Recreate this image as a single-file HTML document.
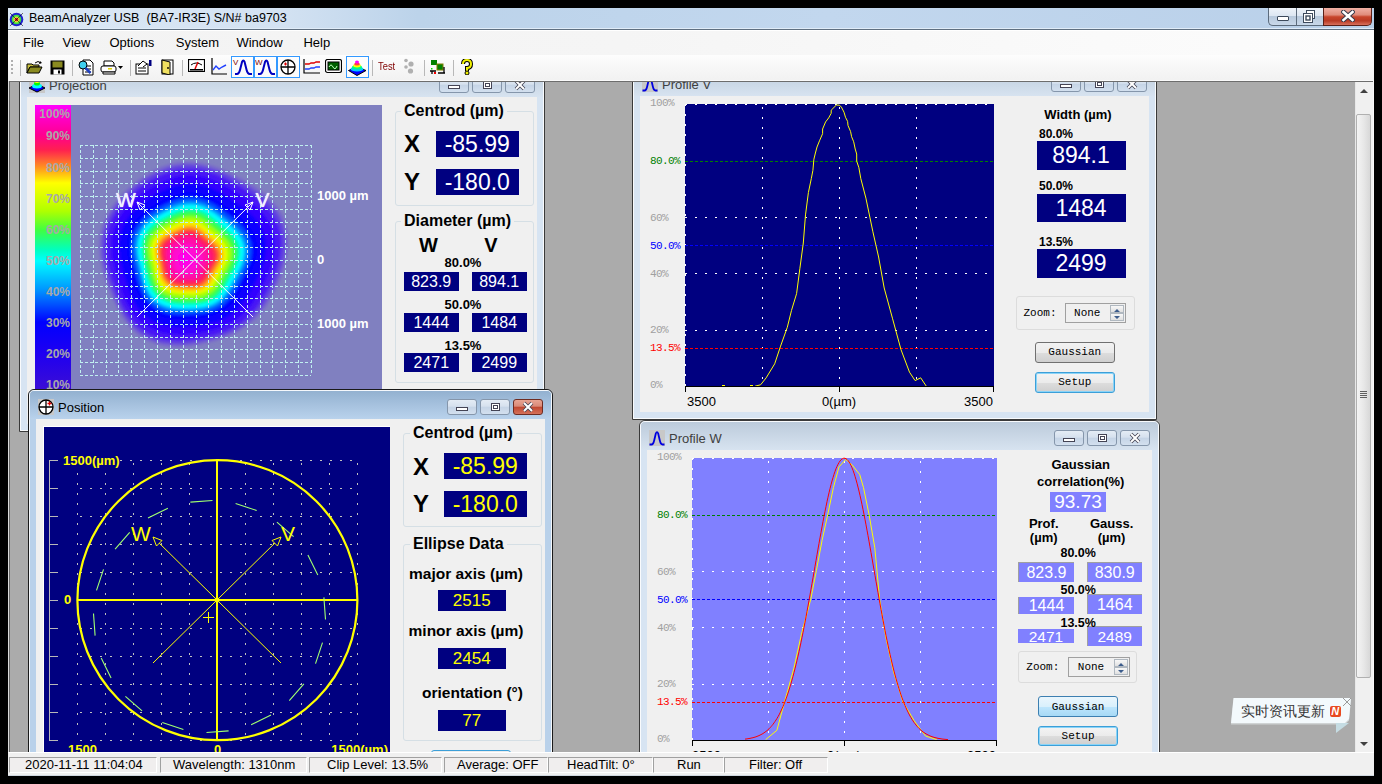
<!DOCTYPE html><html><head><meta charset="utf-8"><style>
html,body{margin:0;padding:0;width:1382px;height:784px;overflow:hidden;background:#000;}
*{box-sizing:border-box;}
</style></head><body>
<div style="position:absolute;left:8px;top:8px;width:1366px;height:21px;background:linear-gradient(90deg,#dce8f5 0%,#d3e2f2 20%,#bcd3ea 30%,#c2d7ee 60%,#b9d0e9 100%);"></div>
<div style="position:absolute;left:8px;top:28px;width:1366px;height:1px;background:#e0ecf8;"></div>
<div style="position:absolute;left:8px;top:29px;width:1366px;height:1px;background:#5f6f80;"></div>
<div style="position:absolute;left:8px;top:30px;width:1366px;height:25px;background:linear-gradient(90deg,#f3f3f3 0%,#f5f5f5 45%,#fafafa 80%,#fcfcfc 100%);border-top:1px solid #fff;"></div>
<div style="position:absolute;left:8px;top:55px;width:1366px;height:26px;background:linear-gradient(#fdfdfd,#f1f1f1);"></div>
<div style="position:absolute;left:8px;top:80px;width:1366px;height:1px;background:#fafafa;"></div>
<div style="position:absolute;left:8px;top:81px;width:1366px;height:671px;background:#ababab;"></div>
<div style="position:absolute;left:8px;top:81px;width:1366px;height:1px;background:#6d6d6d;"></div>
<div style="position:absolute;left:8px;top:81px;width:2px;height:671px;background:#dadada;"></div>
<div style="position:absolute;left:9px;top:81px;width:1px;height:671px;background:#696969;"></div>
<div style="position:absolute;left:0;top:0;width:1382px;height:784px;clip-path:inset(82px 27px 32px 10px);"><div style="position:absolute;left:19px;top:67px;width:526px;height:365px;background:#d7e4f2;border:1px solid #3a3a3a;border-radius:6px 6px 0 0;"></div>
<div style="position:absolute;left:20px;top:68px;width:524px;height:363px;border:1px solid rgba(255,255,255,0.85);border-radius:5px 5px 0 0;"></div>
<div style="position:absolute;left:21px;top:69px;width:522px;height:28px;background:linear-gradient(#bccbdb,#d7e3f0);border-radius:4px 4px 0 0;"></div>
<div style="position:absolute;left:27px;top:97px;width:510px;height:327px;background:#f0f0f0;"></div>
<svg style="position:absolute;left:29px;top:77px;" width="16" height="16" viewBox="0 0 16 16"><rect width="16" height="16" fill="#c8c8c8"/><path d="M0 11L8 7l8 4-8 4z" fill="#0000ff" stroke="#000" stroke-width="1"/><ellipse cx="8" cy="9" rx="5" ry="2.5" fill="#00ffff"/><ellipse cx="8" cy="6.5" rx="3" ry="2" fill="#00ff00"/><ellipse cx="8" cy="4.5" rx="2.5" ry="1.5" fill="#ffff00"/></svg>
<div style="position:absolute;left:49px;top:72.5px;height:26px;font:normal 13px 'Liberation Sans', sans-serif;line-height:26px;color:#404040;white-space:nowrap;">Projection</div>
<div style="position:absolute;left:504.5px;top:77px;width:30.0px;height:16px;background:linear-gradient(#e4ecf5 0%,#d6e1ee 45%,#c5d4e6 50%,#d3e0ef 100%);border:1px solid #8596ab;border-radius:3px;"></div>
<svg style="position:absolute;left:512.5px;top:79px;" width="14" height="12" viewBox="0 0 14 12"><path d="M3 2L11 10M11 2L3 10" stroke="#445" stroke-width="3.6"/><path d="M3 2L11 10M11 2L3 10" stroke="#fff" stroke-width="2"/></svg>
<div style="position:absolute;left:471.5px;top:77px;width:30.0px;height:16px;background:linear-gradient(#e4ecf5 0%,#d6e1ee 45%,#c5d4e6 50%,#d3e0ef 100%);border:1px solid #8596ab;border-radius:3px;"></div>
<div style="position:absolute;left:482.5px;top:81px;width:9.0px;height:8px;border:1px solid #445;background:#fff;"></div>
<div style="position:absolute;left:484.5px;top:83px;width:5.0px;height:4px;border:1px solid #445;background:transparent;"></div>
<div style="position:absolute;left:438.5px;top:77px;width:30.0px;height:16px;background:linear-gradient(#e4ecf5 0%,#d6e1ee 45%,#c5d4e6 50%,#d3e0ef 100%);border:1px solid #8596ab;border-radius:3px;"></div>
<div style="position:absolute;left:447.5px;top:85px;width:12.0px;height:4px;border:1px solid #445;background:#fff;"></div>
<div style="position:absolute;left:35px;top:105px;width:36px;height:319px;background:linear-gradient(#ff00ff 0px,#ff00c0 15px,#ff0090 30px,#ff2050 45px,#ff9020 62px,#ffff00 78px,#b0ff00 106px,#40ff40 125px,#00ffc0 145px,#00ffff 156px,#0090ff 186px,#0000ff 217px,#2000f0 250px,#4010d0 290px,#5020c0 319px);"></div>
<div style="position:absolute;left:-330px;width:400px;text-align:right;top:102px;height:24px;font:bold 12px 'Liberation Sans', sans-serif;line-height:24px;color:#a8a8a8;white-space:nowrap;">100%</div>
<div style="position:absolute;left:-330px;width:400px;text-align:right;top:124px;height:24px;font:bold 12px 'Liberation Sans', sans-serif;line-height:24px;color:#a8a8a8;white-space:nowrap;">90%</div>
<div style="position:absolute;left:-330px;width:400px;text-align:right;top:155.7px;height:24px;font:bold 12px 'Liberation Sans', sans-serif;line-height:24px;color:#a8a8a8;white-space:nowrap;">80%</div>
<div style="position:absolute;left:-330px;width:400px;text-align:right;top:187px;height:24px;font:bold 12px 'Liberation Sans', sans-serif;line-height:24px;color:#a8a8a8;white-space:nowrap;">70%</div>
<div style="position:absolute;left:-330px;width:400px;text-align:right;top:218px;height:24px;font:bold 12px 'Liberation Sans', sans-serif;line-height:24px;color:#a8a8a8;white-space:nowrap;">60%</div>
<div style="position:absolute;left:-330px;width:400px;text-align:right;top:249.39999999999998px;height:24px;font:bold 12px 'Liberation Sans', sans-serif;line-height:24px;color:#a8a8a8;white-space:nowrap;">50%</div>
<div style="position:absolute;left:-330px;width:400px;text-align:right;top:280px;height:24px;font:bold 12px 'Liberation Sans', sans-serif;line-height:24px;color:#a8a8a8;white-space:nowrap;">40%</div>
<div style="position:absolute;left:-330px;width:400px;text-align:right;top:311.4px;height:24px;font:bold 12px 'Liberation Sans', sans-serif;line-height:24px;color:#a8a8a8;white-space:nowrap;">30%</div>
<div style="position:absolute;left:-330px;width:400px;text-align:right;top:342.4px;height:24px;font:bold 12px 'Liberation Sans', sans-serif;line-height:24px;color:#a8a8a8;white-space:nowrap;">20%</div>
<div style="position:absolute;left:-330px;width:400px;text-align:right;top:372.6px;height:24px;font:bold 12px 'Liberation Sans', sans-serif;line-height:24px;color:#a8a8a8;white-space:nowrap;">10%</div>
<div style="position:absolute;left:71px;top:105px;width:311px;height:319px;background:#8080c0;"></div>
<svg style="position:absolute;left:0px;top:0px;" width="400" height="430" viewBox="0 0 400 430"><defs><filter id="bl" x="-20%" y="-20%" width="140%" height="140%"><feGaussianBlur stdDeviation="1.6"/></filter></defs><g filter="url(#bl)"><polygon points="287.5,256.5 285.6,264.5 283.2,272.1 280.4,279.5 277.4,286.7 274.0,293.6 270.3,300.3 266.2,306.7 261.6,312.8 256.5,318.5 250.8,323.6 244.6,328.1 238.1,331.9 231.2,335.2 224.2,338.0 217.0,340.4 209.7,342.4 202.2,344.2 194.5,345.7 186.6,346.8 178.5,347.3 170.2,347.0 162.0,345.8 153.9,343.6 146.2,340.2 139.1,335.7 132.6,330.2 127.0,324.0 122.1,317.2 117.9,310.1 114.2,302.8 110.9,295.5 108.0,288.0 105.2,280.4 102.8,272.7 100.9,264.7 99.5,256.5 98.9,248.1 99.2,239.7 100.6,231.3 103.0,223.2 106.5,215.4 110.7,208.1 115.7,201.3 121.2,195.0 127.2,189.2 133.4,183.7 140.0,178.7 146.9,174.1 154.2,170.0 161.8,166.6 169.7,163.9 177.9,162.2 186.2,161.4 194.5,161.7 202.7,162.9 210.6,164.9 218.3,167.5 225.8,170.6 233.0,174.0 240.1,177.6 247.0,181.5 254.0,185.6 260.7,190.3 267.2,195.5 273.2,201.4 278.5,208.0 282.9,215.3 286.1,223.2 288.1,231.4 288.9,239.9 288.7,248.3" fill="#7868cc"/><polygon points="284.3,256.6 282.4,264.3 280.1,271.7 277.3,278.9 274.3,285.8 271.1,292.4 267.5,298.9 263.6,305.2 259.2,311.1 254.2,316.6 248.8,321.6 242.9,326.1 236.5,329.9 229.9,333.1 223.0,335.8 216.0,338.0 208.9,340.0 201.7,341.6 194.2,343.0 186.6,343.9 178.7,344.4 170.8,344.1 162.8,343.0 154.9,340.9 147.5,337.6 140.5,333.3 134.3,328.1 128.8,322.1 124.0,315.5 120.0,308.6 116.5,301.5 113.4,294.3 110.5,287.1 108.0,279.7 105.7,272.2 103.8,264.5 102.4,256.6 101.8,248.5 102.1,240.4 103.3,232.2 105.6,224.4 108.9,216.8 113.0,209.7 117.8,203.1 123.2,197.0 129.0,191.4 135.1,186.2 141.5,181.4 148.2,177.0 155.3,173.0 162.6,169.7 170.2,167.1 178.1,165.4 186.2,164.6 194.2,164.8 202.2,166.0 209.9,167.9 217.3,170.4 224.5,173.5 231.4,176.8 238.2,180.4 245.0,184.2 251.6,188.2 258.1,192.7 264.4,197.8 270.2,203.4 275.3,209.8 279.6,216.8 282.8,224.4 284.8,232.3 285.7,240.5 285.4,248.6" fill="#6040e0"/><polygon points="280.0,256.8 278.2,264.1 275.9,271.2 273.2,278.0 270.3,284.6 267.1,290.9 263.8,297.1 260.0,303.1 255.9,308.8 251.2,314.1 246.1,319.0 240.5,323.3 234.4,327.1 228.1,330.2 221.5,332.8 214.8,334.9 207.9,336.7 201.0,338.1 193.8,339.3 186.6,340.2 179.1,340.6 171.5,340.3 163.8,339.2 156.3,337.2 149.1,334.2 142.5,330.2 136.4,325.2 131.2,319.4 126.6,313.2 122.8,306.5 119.5,299.7 116.6,292.8 114.0,285.8 111.6,278.8 109.5,271.6 107.7,264.3 106.4,256.8 105.7,249.0 105.8,241.2 106.9,233.5 109.0,225.9 112.1,218.6 116.0,211.8 120.7,205.5 125.9,199.7 131.5,194.4 137.4,189.5 143.6,184.9 150.0,180.8 156.7,177.1 163.7,173.9 171.0,171.4 178.5,169.7 186.2,168.9 193.8,169.0 201.4,170.0 208.8,171.8 215.9,174.3 222.8,177.2 229.4,180.5 235.8,184.0 242.2,187.7 248.5,191.7 254.6,196.0 260.6,200.8 266.1,206.1 271.1,212.1 275.2,218.8 278.4,226.0 280.4,233.6 281.3,241.3 281.1,249.1" fill="#4818f4"/><polygon points="273.6,257.0 271.9,263.8 269.6,270.4 267.0,276.7 264.2,282.8 261.3,288.7 258.1,294.4 254.7,300.0 251.0,305.4 246.8,310.4 242.1,315.1 236.9,319.2 231.3,322.8 225.4,325.8 219.2,328.2 212.9,330.1 206.5,331.7 199.9,332.9 193.3,333.9 186.5,334.5 179.6,334.8 172.5,334.6 165.4,333.6 158.4,331.8 151.7,329.1 145.4,325.4 139.7,320.8 134.7,315.5 130.5,309.6 127.0,303.4 124.0,297.0 121.4,290.5 119.1,284.0 117.0,277.4 115.1,270.7 113.5,263.9 112.2,257.0 111.5,249.8 111.5,242.5 112.4,235.3 114.2,228.2 117.0,221.4 120.6,215.0 125.0,209.1 129.9,203.7 135.2,198.8 140.8,194.4 146.6,190.3 152.6,186.5 158.9,183.1 165.3,180.2 172.1,177.8 179.0,176.1 186.1,175.3 193.3,175.3 200.4,176.1 207.3,177.8 213.9,180.1 220.2,182.9 226.3,186.1 232.3,189.5 238.1,193.0 243.8,196.8 249.4,200.8 254.9,205.2 260.1,210.2 264.8,215.7 268.8,221.8 271.8,228.4 273.8,235.4 274.7,242.6 274.6,249.8" fill="#3000ff"/><polygon points="265.0,257.2 263.4,263.4 261.3,269.4 258.8,275.0 256.2,280.4 253.5,285.7 250.7,290.8 247.7,295.9 244.4,300.8 240.8,305.5 236.6,309.8 232.1,313.7 227.1,317.0 221.7,319.8 216.1,322.0 210.3,323.6 204.5,324.9 198.6,325.9 192.6,326.6 186.4,327.0 180.2,327.2 173.9,326.9 167.5,326.1 161.2,324.6 155.0,322.2 149.3,319.0 144.1,315.0 139.6,310.2 135.8,304.9 132.6,299.2 130.0,293.3 127.9,287.4 126.0,281.5 124.2,275.6 122.6,269.6 121.1,263.5 119.9,257.2 119.2,250.8 119.0,244.3 119.6,237.7 121.2,231.3 123.6,225.1 126.8,219.3 130.7,214.0 135.2,209.2 140.1,204.8 145.3,200.9 150.6,197.3 156.1,194.1 161.7,191.1 167.5,188.5 173.5,186.3 179.8,184.7 186.1,183.8 192.6,183.6 198.9,184.3 205.1,185.8 211.1,187.9 216.8,190.6 222.3,193.5 227.5,196.7 232.6,200.1 237.6,203.5 242.6,207.2 247.5,211.1 252.2,215.5 256.5,220.3 260.2,225.7 263.1,231.6 265.0,237.8 266.0,244.3 265.9,250.8" fill="#1000ff"/><polygon points="256.4,257.5 254.9,263.1 252.9,268.3 250.6,273.3 248.3,278.1 245.8,282.7 243.3,287.3 240.7,291.8 237.9,296.2 234.7,300.5 231.2,304.5 227.2,308.1 222.8,311.1 218.0,313.7 212.9,315.6 207.8,317.0 202.5,318.1 197.2,318.8 191.8,319.2 186.4,319.5 180.9,319.6 175.2,319.3 169.6,318.6 163.9,317.4 158.4,315.4 153.2,312.6 148.6,309.1 144.5,304.8 141.1,300.1 138.3,295.0 136.1,289.7 134.3,284.4 132.7,279.0 131.3,273.7 130.0,268.4 128.7,263.1 127.6,257.5 126.8,251.8 126.5,246.0 126.9,240.2 128.1,234.4 130.2,228.8 133.0,223.6 136.6,218.9 140.7,214.6 145.1,210.8 149.8,207.5 154.6,204.4 159.5,201.6 164.5,199.0 169.7,196.7 175.0,194.7 180.5,193.2 186.1,192.3 191.8,192.0 197.5,192.6 203.0,193.8 208.4,195.8 213.4,198.2 218.2,201.0 222.8,203.9 227.2,207.0 231.6,210.2 235.9,213.4 240.2,216.9 244.4,220.7 248.3,224.9 251.6,229.6 254.4,234.8 256.2,240.3 257.2,246.0 257.2,251.8" fill="#0000ff"/><polygon points="251.0,257.7 249.6,262.8 247.7,267.6 245.5,272.2 243.3,276.6 241.0,280.9 238.7,285.1 236.3,289.2 233.8,293.3 231.0,297.3 227.7,301.1 224.1,304.5 220.0,307.4 215.6,309.8 210.9,311.6 206.1,312.9 201.2,313.7 196.3,314.3 191.3,314.6 186.3,314.8 181.3,314.8 176.1,314.6 170.9,314.0 165.6,312.9 160.5,311.1 155.7,308.6 151.4,305.3 147.6,301.5 144.4,297.1 141.9,292.3 139.9,287.4 138.3,282.4 137.0,277.5 135.7,272.6 134.5,267.7 133.4,262.8 132.3,257.7 131.5,252.5 131.2,247.1 131.5,241.7 132.5,236.3 134.4,231.2 137.0,226.3 140.3,222.0 144.1,218.1 148.2,214.6 152.6,211.6 157.1,208.8 161.6,206.3 166.3,203.9 171.0,201.8 175.9,199.9 180.9,198.5 186.1,197.6 191.3,197.3 196.6,197.7 201.7,198.9 206.6,200.7 211.3,203.0 215.7,205.6 219.8,208.4 223.8,211.3 227.8,214.3 231.8,217.3 235.7,220.5 239.5,224.0 243.2,227.8 246.4,232.1 248.9,236.8 250.7,241.8 251.7,247.1 251.7,252.4" fill="#0050ff"/><polygon points="246.6,257.9 245.3,262.6 243.5,267.1 241.5,271.4 239.3,275.5 237.2,279.4 235.0,283.3 232.9,287.2 230.5,291.1 227.9,294.8 225.0,298.4 221.6,301.6 217.8,304.4 213.7,306.6 209.3,308.3 204.8,309.5 200.2,310.2 195.6,310.7 191.0,311.0 186.3,311.1 181.6,311.1 176.8,310.8 171.9,310.3 167.0,309.2 162.2,307.6 157.7,305.3 153.6,302.4 150.1,298.7 147.1,294.6 144.8,290.2 143.0,285.6 141.5,280.9 140.3,276.3 139.2,271.7 138.2,267.2 137.1,262.6 136.1,257.9 135.3,253.0 134.9,248.0 135.2,242.9 136.1,237.9 137.8,233.0 140.2,228.5 143.3,224.4 146.8,220.8 150.8,217.6 154.9,214.8 159.1,212.3 163.3,210.0 167.6,207.8 172.0,205.8 176.6,204.1 181.2,202.7 186.1,201.8 191.0,201.5 195.9,201.9 200.7,202.9 205.2,204.6 209.6,206.8 213.6,209.3 217.5,212.0 221.2,214.7 224.8,217.5 228.5,220.4 232.1,223.3 235.7,226.5 239.1,230.1 242.1,234.0 244.6,238.3 246.4,243.0 247.3,247.9 247.3,252.9" fill="#00a0ff"/><polygon points="243.4,258.0 242.1,262.5 240.4,266.7 238.4,270.7 236.4,274.6 234.3,278.3 232.3,282.0 230.3,285.7 228.1,289.3 225.7,292.9 222.9,296.3 219.7,299.4 216.2,302.1 212.3,304.2 208.1,305.8 203.8,306.9 199.4,307.6 195.1,308.0 190.7,308.2 186.3,308.3 181.8,308.2 177.3,308.0 172.7,307.5 168.0,306.5 163.5,305.0 159.2,302.9 155.3,300.1 152.0,296.7 149.2,292.8 147.0,288.6 145.3,284.2 144.0,279.8 142.9,275.4 141.9,271.0 140.9,266.8 139.8,262.4 138.9,258.0 138.1,253.4 137.8,248.6 137.9,243.8 138.7,239.1 140.3,234.5 142.6,230.2 145.5,226.3 148.9,222.9 152.6,219.9 156.6,217.3 160.6,214.9 164.6,212.8 168.7,210.7 172.8,208.9 177.1,207.2 181.5,205.9 186.1,205.0 190.7,204.7 195.3,205.0 199.9,206.0 204.2,207.6 208.3,209.7 212.1,212.1 215.7,214.6 219.2,217.3 222.6,219.9 226.0,222.6 229.5,225.4 232.9,228.4 236.1,231.8 239.0,235.4 241.4,239.5 243.1,243.9 244.0,248.6 244.0,253.3" fill="#00ffff"/><polygon points="239.0,258.1 237.8,262.3 236.2,266.2 234.3,269.9 232.4,273.4 230.5,276.8 228.7,280.2 226.8,283.6 224.8,287.1 222.6,290.4 220.1,293.6 217.2,296.5 213.9,299.0 210.3,301.0 206.5,302.5 202.5,303.5 198.4,304.1 194.4,304.4 190.3,304.5 186.3,304.5 182.1,304.5 178.0,304.2 173.7,303.8 169.4,302.9 165.2,301.6 161.2,299.6 157.6,297.1 154.5,293.9 151.9,290.3 149.9,286.4 148.4,282.3 147.2,278.2 146.2,274.2 145.3,270.2 144.4,266.2 143.5,262.2 142.6,258.1 141.9,253.9 141.5,249.5 141.6,245.0 142.3,240.6 143.7,236.4 145.8,232.4 148.5,228.8 151.7,225.7 155.2,222.9 158.8,220.6 162.5,218.4 166.3,216.5 170.0,214.6 173.9,212.9 177.8,211.3 181.8,210.1 186.0,209.2 190.3,208.9 194.6,209.2 198.8,210.1 202.8,211.5 206.6,213.5 210.1,215.8 213.4,218.2 216.5,220.7 219.6,223.2 222.8,225.7 225.9,228.2 229.1,231.0 232.1,234.0 234.8,237.4 237.0,241.1 238.7,245.2 239.5,249.4 239.6,253.8" fill="#00ff90"/><polygon points="235.7,258.2 234.6,262.1 233.0,265.8 231.3,269.3 229.5,272.6 227.7,275.8 225.9,278.9 224.2,282.1 222.4,285.3 220.4,288.5 218.0,291.6 215.3,294.3 212.3,296.7 208.9,298.6 205.2,300.0 201.5,300.9 197.7,301.4 193.8,301.7 190.0,301.7 186.2,301.7 182.4,301.6 178.5,301.4 174.5,301.0 170.4,300.2 166.5,299.0 162.7,297.2 159.3,294.8 156.4,291.9 154.0,288.5 152.1,284.8 150.7,281.0 149.6,277.1 148.7,273.2 147.9,269.5 147.1,265.8 146.3,262.0 145.4,258.2 144.7,254.2 144.3,250.1 144.3,246.0 145.0,241.8 146.3,237.8 148.2,234.1 150.8,230.7 153.8,227.8 157.0,225.2 160.5,223.0 164.0,221.0 167.5,219.2 171.1,217.5 174.6,215.9 178.3,214.4 182.1,213.2 186.0,212.4 190.0,212.0 194.1,212.3 198.0,213.1 201.8,214.5 205.3,216.4 208.6,218.5 211.6,220.8 214.6,223.2 217.5,225.6 220.4,227.9 223.3,230.3 226.3,232.9 229.1,235.7 231.7,238.8 233.8,242.3 235.4,246.1 236.2,250.1 236.3,254.2" fill="#40ff40"/><polygon points="231.3,258.4 230.3,261.9 228.8,265.3 227.2,268.4 225.5,271.4 223.9,274.3 222.3,277.2 220.8,280.1 219.1,283.1 217.3,286.0 215.2,288.8 212.8,291.4 210.0,293.6 206.9,295.3 203.6,296.6 200.1,297.4 196.6,297.8 193.1,298.0 189.7,298.0 186.2,298.0 182.7,297.9 179.1,297.7 175.5,297.3 171.8,296.6 168.2,295.5 164.8,293.9 161.6,291.8 158.9,289.1 156.7,286.0 155.0,282.6 153.8,279.1 152.8,275.5 152.1,272.0 151.4,268.6 150.7,265.2 149.9,261.8 149.1,258.4 148.4,254.7 148.0,251.0 148.0,247.2 148.5,243.4 149.7,239.7 151.5,236.3 153.8,233.2 156.5,230.6 159.6,228.3 162.8,226.3 166.0,224.5 169.2,222.9 172.4,221.4 175.7,219.9 179.0,218.5 182.5,217.4 186.0,216.6 189.7,216.3 193.3,216.5 196.9,217.2 200.4,218.5 203.6,220.2 206.5,222.2 209.3,224.4 211.9,226.6 214.5,228.7 217.2,230.9 219.8,233.1 222.5,235.4 225.1,237.9 227.5,240.7 229.5,243.9 231.0,247.3 231.8,250.9 231.9,254.7" fill="#a0ff00"/><polygon points="227.0,258.5 226.0,261.7 224.7,264.7 223.2,267.6 221.6,270.3 220.1,272.9 218.7,275.5 217.3,278.1 215.9,280.8 214.3,283.5 212.4,286.0 210.2,288.4 207.7,290.4 204.9,292.0 201.9,293.1 198.8,293.9 195.6,294.2 192.4,294.4 189.3,294.3 186.2,294.2 183.0,294.1 179.8,294.0 176.5,293.6 173.2,293.0 169.9,292.1 166.8,290.7 163.9,288.7 161.5,286.3 159.5,283.5 158.0,280.4 156.8,277.2 156.0,274.0 155.4,270.8 154.8,267.7 154.2,264.7 153.5,261.6 152.8,258.5 152.1,255.2 151.7,251.9 151.7,248.4 152.1,245.0 153.1,241.6 154.7,238.5 156.8,235.8 159.3,233.4 162.1,231.3 165.0,229.6 167.9,228.0 170.9,226.6 173.8,225.2 176.7,223.9 179.7,222.6 182.8,221.6 186.0,220.8 189.3,220.5 192.6,220.6 195.9,221.3 198.9,222.5 201.8,224.1 204.5,225.9 207.0,227.9 209.3,229.9 211.6,231.9 214.0,233.8 216.4,235.8 218.8,237.8 221.2,240.1 223.4,242.6 225.2,245.4 226.6,248.5 227.3,251.8 227.4,255.2" fill="#e8ff00"/><polygon points="223.7,258.6 222.7,261.6 221.5,264.3 220.1,266.9 218.7,269.4 217.3,271.8 216.0,274.2 214.7,276.6 213.4,279.1 212.0,281.6 210.3,284.0 208.3,286.1 206.0,288.0 203.4,289.5 200.6,290.6 197.8,291.2 194.8,291.5 191.9,291.6 189.0,291.5 186.1,291.4 183.3,291.3 180.3,291.2 177.3,290.9 174.2,290.3 171.2,289.5 168.3,288.2 165.7,286.4 163.4,284.2 161.6,281.6 160.2,278.8 159.2,275.8 158.5,272.9 157.9,269.9 157.4,267.1 156.8,264.3 156.2,261.5 155.5,258.6 154.9,255.6 154.5,252.5 154.4,249.3 154.8,246.2 155.7,243.1 157.2,240.2 159.1,237.7 161.5,235.5 164.0,233.6 166.7,232.0 169.4,230.6 172.1,229.3 174.8,228.1 177.5,226.8 180.2,225.7 183.0,224.7 186.0,224.0 189.0,223.7 192.1,223.8 195.1,224.4 197.9,225.5 200.5,226.9 203.0,228.7 205.2,230.5 207.4,232.4 209.5,234.2 211.6,236.0 213.8,237.8 216.1,239.7 218.2,241.7 220.3,244.0 222.0,246.6 223.3,249.4 224.0,252.4 224.1,255.5" fill="#ffd000"/><polygon points="220.3,258.7 219.5,261.4 218.4,263.9 217.1,266.3 215.8,268.5 214.5,270.7 213.3,272.9 212.2,275.1 211.0,277.4 209.7,279.7 208.2,281.9 206.4,283.9 204.3,285.6 201.9,287.0 199.4,287.9 196.7,288.5 194.0,288.8 191.4,288.8 188.7,288.8 186.1,288.6 183.5,288.5 180.8,288.4 178.0,288.1 175.3,287.6 172.5,286.9 169.8,285.7 167.4,284.1 165.4,282.1 163.7,279.7 162.4,277.2 161.5,274.4 160.9,271.7 160.4,269.0 160.0,266.4 159.5,263.9 158.9,261.3 158.3,258.7 157.7,256.0 157.3,253.2 157.2,250.3 157.5,247.3 158.3,244.5 159.7,241.9 161.4,239.6 163.6,237.6 165.9,235.9 168.4,234.5 170.9,233.2 173.3,232.0 175.8,230.9 178.2,229.8 180.7,228.8 183.3,227.8 186.0,227.2 188.7,226.8 191.5,226.9 194.2,227.5 196.8,228.5 199.3,229.8 201.5,231.4 203.5,233.1 205.5,234.9 207.3,236.5 209.3,238.2 211.3,239.8 213.3,241.5 215.3,243.4 217.2,245.4 218.8,247.8 220.0,250.3 220.6,253.1 220.8,255.9" fill="#ff8020"/><polygon points="217.0,258.8 216.3,261.3 215.2,263.5 214.0,265.7 212.8,267.7 211.7,269.7 210.6,271.6 209.6,273.6 208.6,275.7 207.4,277.8 206.0,279.8 204.4,281.6 202.5,283.2 200.4,284.4 198.1,285.3 195.7,285.8 193.3,286.0 190.8,286.1 188.5,286.0 186.1,285.9 183.7,285.7 181.3,285.6 178.8,285.4 176.3,284.9 173.8,284.3 171.4,283.2 169.2,281.8 167.3,280.0 165.8,277.9 164.6,275.5 163.8,273.0 163.3,270.6 162.9,268.1 162.5,265.8 162.1,263.5 161.6,261.2 161.0,258.8 160.5,256.4 160.1,253.8 160.0,251.2 160.2,248.5 161.0,246.0 162.2,243.6 163.8,241.5 165.7,239.7 167.8,238.2 170.1,236.9 172.3,235.8 174.6,234.8 176.8,233.8 179.0,232.8 181.2,231.8 183.6,231.0 186.0,230.3 188.5,230.0 191.0,230.1 193.4,230.6 195.8,231.5 198.0,232.7 200.0,234.2 201.8,235.7 203.5,237.3 205.2,238.9 206.9,240.3 208.7,241.8 210.6,243.3 212.4,245.0 214.1,246.9 215.6,249.0 216.7,251.3 217.3,253.7 217.4,256.3" fill="#ff3040"/><polygon points="213.7,258.9 213.0,261.1 212.1,263.1 211.0,265.0 209.9,266.8 208.9,268.6 207.9,270.3 207.0,272.1 206.1,274.0 205.1,275.8 203.9,277.7 202.5,279.3 200.8,280.8 198.9,281.9 196.8,282.7 194.7,283.1 192.5,283.3 190.3,283.3 188.2,283.2 186.1,283.1 184.0,282.9 181.8,282.8 179.6,282.6 177.3,282.3 175.1,281.7 172.9,280.7 170.9,279.5 169.3,277.9 167.9,276.0 166.9,273.8 166.2,271.6 165.7,269.4 165.4,267.2 165.0,265.1 164.7,263.1 164.2,261.0 163.7,258.9 163.2,256.7 162.8,254.5 162.7,252.1 162.9,249.7 163.6,247.5 164.6,245.3 166.1,243.5 167.8,241.8 169.8,240.5 171.8,239.4 173.8,238.4 175.8,237.5 177.8,236.6 179.7,235.7 181.7,234.8 183.8,234.1 186.0,233.5 188.2,233.2 190.4,233.3 192.6,233.7 194.7,234.5 196.7,235.6 198.4,236.9 200.1,238.3 201.6,239.8 203.1,241.2 204.6,242.5 206.2,243.8 207.9,245.1 209.5,246.6 211.1,248.3 212.4,250.1 213.4,252.2 213.9,254.4 214.0,256.7" fill="#ff1870"/><polygon points="209.3,259.1 208.7,260.9 207.9,262.6 207.0,264.2 206.0,265.7 205.2,267.2 204.4,268.6 203.6,270.1 202.9,271.7 202.0,273.3 201.0,274.8 199.9,276.3 198.4,277.5 196.8,278.4 195.1,279.1 193.3,279.5 191.4,279.6 189.6,279.6 187.8,279.5 186.0,279.3 184.3,279.2 182.4,279.1 180.6,278.9 178.7,278.7 176.8,278.2 175.0,277.4 173.3,276.4 171.9,275.0 170.7,273.4 169.9,271.6 169.3,269.8 168.9,267.9 168.7,266.0 168.4,264.3 168.1,262.5 167.7,260.8 167.3,259.1 166.9,257.2 166.5,255.3 166.4,253.3 166.6,251.3 167.1,249.4 168.0,247.6 169.2,246.0 170.7,244.7 172.3,243.6 174.0,242.6 175.7,241.8 177.4,241.1 179.1,240.4 180.7,239.6 182.4,238.9 184.1,238.2 185.9,237.7 187.8,237.5 189.7,237.5 191.6,237.8 193.3,238.5 194.9,239.5 196.4,240.6 197.8,241.8 199.0,243.0 200.3,244.2 201.6,245.3 202.9,246.4 204.3,247.5 205.7,248.8 207.0,250.1 208.1,251.7 209.0,253.4 209.5,255.3 209.6,257.2" fill="#ff10a8"/><polygon points="202.6,259.3 202.2,260.6 201.6,261.8 200.9,262.9 200.3,264.0 199.6,265.1 199.1,266.1 198.5,267.2 198.0,268.3 197.4,269.5 196.7,270.6 195.9,271.6 194.9,272.5 193.8,273.2 192.5,273.7 191.2,273.9 189.9,274.0 188.5,274.0 187.3,273.9 186.0,273.8 184.7,273.7 183.4,273.6 182.1,273.5 180.7,273.3 179.4,272.9 178.1,272.4 176.9,271.7 175.8,270.7 175.0,269.6 174.4,268.3 174.0,266.9 173.8,265.6 173.6,264.3 173.4,263.0 173.3,261.8 173.0,260.5 172.7,259.3 172.3,258.0 172.1,256.6 172.0,255.2 172.1,253.8 172.4,252.4 173.0,251.1 173.9,249.9 175.0,249.0 176.2,248.2 177.4,247.6 178.7,247.0 179.9,246.5 181.0,246.0 182.2,245.4 183.4,244.9 184.6,244.4 185.9,244.0 187.3,243.8 188.6,243.8 189.9,244.1 191.2,244.6 192.4,245.3 193.4,246.1 194.4,247.0 195.2,247.9 196.1,248.7 197.0,249.5 197.9,250.3 198.9,251.1 199.9,252.0 200.9,252.9 201.7,254.0 202.4,255.2 202.7,256.6 202.8,257.9" fill="#ff08d0"/><polygon points="194.8,259.5 194.6,260.2 194.3,260.9 193.9,261.5 193.5,262.1 193.2,262.6 192.9,263.2 192.6,263.7 192.3,264.3 192.0,265.0 191.7,265.6 191.2,266.2 190.7,266.6 190.1,267.0 189.4,267.3 188.7,267.4 188.0,267.4 187.3,267.4 186.6,267.3 185.9,267.2 185.3,267.2 184.6,267.1 183.9,267.1 183.1,267.0 182.4,266.8 181.7,266.6 181.0,266.2 180.5,265.7 180.0,265.0 179.7,264.3 179.5,263.6 179.4,262.9 179.3,262.2 179.3,261.5 179.2,260.8 179.0,260.2 178.9,259.5 178.7,258.8 178.5,258.1 178.4,257.3 178.5,256.6 178.7,255.8 179.0,255.1 179.5,254.5 180.0,254.0 180.7,253.6 181.4,253.3 182.0,253.0 182.7,252.7 183.3,252.5 183.9,252.2 184.6,251.9 185.2,251.6 185.9,251.4 186.6,251.3 187.3,251.3 188.0,251.4 188.7,251.7 189.3,252.1 189.9,252.5 190.4,253.0 190.8,253.5 191.3,254.0 191.8,254.4 192.3,254.8 192.8,255.2 193.3,255.7 193.9,256.2 194.3,256.7 194.7,257.4 194.9,258.1 194.9,258.8" fill="#ff00e8"/></g></svg>
<svg style="position:absolute;left:0px;top:0px;" width="400" height="430" viewBox="0 0 400 430"><line x1="80.5" y1="145" x2="80.5" y2="375" stroke="#c0f0f0" stroke-width="1" stroke-dasharray="3 2" stroke-dashoffset="0" shape-rendering="crispEdges"/><line x1="80" y1="145.5" x2="311" y2="145.5" stroke="#c0f0f0" stroke-width="1" stroke-dasharray="3 2" stroke-dashoffset="0" shape-rendering="crispEdges"/><line x1="93.5" y1="145" x2="93.5" y2="375" stroke="#c0f0f0" stroke-width="1" stroke-dasharray="3 2" stroke-dashoffset="0" shape-rendering="crispEdges"/><line x1="80" y1="158.5" x2="311" y2="158.5" stroke="#c0f0f0" stroke-width="1" stroke-dasharray="3 2" stroke-dashoffset="0" shape-rendering="crispEdges"/><line x1="106.5" y1="145" x2="106.5" y2="375" stroke="#c0f0f0" stroke-width="1" stroke-dasharray="3 2" stroke-dashoffset="0" shape-rendering="crispEdges"/><line x1="80" y1="171.5" x2="311" y2="171.5" stroke="#c0f0f0" stroke-width="1" stroke-dasharray="3 2" stroke-dashoffset="0" shape-rendering="crispEdges"/><line x1="118.5" y1="145" x2="118.5" y2="375" stroke="#c0f0f0" stroke-width="1" stroke-dasharray="3 2" stroke-dashoffset="0" shape-rendering="crispEdges"/><line x1="80" y1="183.5" x2="311" y2="183.5" stroke="#c0f0f0" stroke-width="1" stroke-dasharray="3 2" stroke-dashoffset="0" shape-rendering="crispEdges"/><line x1="131.5" y1="145" x2="131.5" y2="375" stroke="#c0f0f0" stroke-width="1" stroke-dasharray="3 2" stroke-dashoffset="0" shape-rendering="crispEdges"/><line x1="80" y1="196.5" x2="311" y2="196.5" stroke="#c0f0f0" stroke-width="1" stroke-dasharray="3 2" stroke-dashoffset="0" shape-rendering="crispEdges"/><line x1="144.5" y1="145" x2="144.5" y2="375" stroke="#c0f0f0" stroke-width="1" stroke-dasharray="3 2" stroke-dashoffset="0" shape-rendering="crispEdges"/><line x1="80" y1="209.5" x2="311" y2="209.5" stroke="#c0f0f0" stroke-width="1" stroke-dasharray="3 2" stroke-dashoffset="0" shape-rendering="crispEdges"/><line x1="157.5" y1="145" x2="157.5" y2="375" stroke="#c0f0f0" stroke-width="1" stroke-dasharray="3 2" stroke-dashoffset="0" shape-rendering="crispEdges"/><line x1="80" y1="222.5" x2="311" y2="222.5" stroke="#c0f0f0" stroke-width="1" stroke-dasharray="3 2" stroke-dashoffset="0" shape-rendering="crispEdges"/><line x1="170.5" y1="145" x2="170.5" y2="375" stroke="#c0f0f0" stroke-width="1" stroke-dasharray="3 2" stroke-dashoffset="0" shape-rendering="crispEdges"/><line x1="80" y1="234.5" x2="311" y2="234.5" stroke="#c0f0f0" stroke-width="1" stroke-dasharray="3 2" stroke-dashoffset="0" shape-rendering="crispEdges"/><line x1="183.5" y1="145" x2="183.5" y2="375" stroke="#c0f0f0" stroke-width="1" stroke-dasharray="3 2" stroke-dashoffset="0" shape-rendering="crispEdges"/><line x1="80" y1="247.5" x2="311" y2="247.5" stroke="#c0f0f0" stroke-width="1" stroke-dasharray="3 2" stroke-dashoffset="0" shape-rendering="crispEdges"/><line x1="196.5" y1="145" x2="196.5" y2="375" stroke="#c0f0f0" stroke-width="1" stroke-dasharray="3 2" stroke-dashoffset="0" shape-rendering="crispEdges"/><line x1="80" y1="260.5" x2="311" y2="260.5" stroke="#c0f0f0" stroke-width="1" stroke-dasharray="3 2" stroke-dashoffset="0" shape-rendering="crispEdges"/><line x1="208.5" y1="145" x2="208.5" y2="375" stroke="#c0f0f0" stroke-width="1" stroke-dasharray="3 2" stroke-dashoffset="0" shape-rendering="crispEdges"/><line x1="80" y1="273.5" x2="311" y2="273.5" stroke="#c0f0f0" stroke-width="1" stroke-dasharray="3 2" stroke-dashoffset="0" shape-rendering="crispEdges"/><line x1="221.5" y1="145" x2="221.5" y2="375" stroke="#c0f0f0" stroke-width="1" stroke-dasharray="3 2" stroke-dashoffset="0" shape-rendering="crispEdges"/><line x1="80" y1="286.5" x2="311" y2="286.5" stroke="#c0f0f0" stroke-width="1" stroke-dasharray="3 2" stroke-dashoffset="0" shape-rendering="crispEdges"/><line x1="234.5" y1="145" x2="234.5" y2="375" stroke="#c0f0f0" stroke-width="1" stroke-dasharray="3 2" stroke-dashoffset="0" shape-rendering="crispEdges"/><line x1="80" y1="298.5" x2="311" y2="298.5" stroke="#c0f0f0" stroke-width="1" stroke-dasharray="3 2" stroke-dashoffset="0" shape-rendering="crispEdges"/><line x1="247.5" y1="145" x2="247.5" y2="375" stroke="#c0f0f0" stroke-width="1" stroke-dasharray="3 2" stroke-dashoffset="0" shape-rendering="crispEdges"/><line x1="80" y1="311.5" x2="311" y2="311.5" stroke="#c0f0f0" stroke-width="1" stroke-dasharray="3 2" stroke-dashoffset="0" shape-rendering="crispEdges"/><line x1="260.5" y1="145" x2="260.5" y2="375" stroke="#c0f0f0" stroke-width="1" stroke-dasharray="3 2" stroke-dashoffset="0" shape-rendering="crispEdges"/><line x1="80" y1="324.5" x2="311" y2="324.5" stroke="#c0f0f0" stroke-width="1" stroke-dasharray="3 2" stroke-dashoffset="0" shape-rendering="crispEdges"/><line x1="272.5" y1="145" x2="272.5" y2="375" stroke="#c0f0f0" stroke-width="1" stroke-dasharray="3 2" stroke-dashoffset="0" shape-rendering="crispEdges"/><line x1="80" y1="337.5" x2="311" y2="337.5" stroke="#c0f0f0" stroke-width="1" stroke-dasharray="3 2" stroke-dashoffset="0" shape-rendering="crispEdges"/><line x1="285.5" y1="145" x2="285.5" y2="375" stroke="#c0f0f0" stroke-width="1" stroke-dasharray="3 2" stroke-dashoffset="0" shape-rendering="crispEdges"/><line x1="80" y1="349.5" x2="311" y2="349.5" stroke="#c0f0f0" stroke-width="1" stroke-dasharray="3 2" stroke-dashoffset="0" shape-rendering="crispEdges"/><line x1="298.5" y1="145" x2="298.5" y2="375" stroke="#c0f0f0" stroke-width="1" stroke-dasharray="3 2" stroke-dashoffset="0" shape-rendering="crispEdges"/><line x1="80" y1="362.5" x2="311" y2="362.5" stroke="#c0f0f0" stroke-width="1" stroke-dasharray="3 2" stroke-dashoffset="0" shape-rendering="crispEdges"/><line x1="311.5" y1="145" x2="311.5" y2="375" stroke="#c0f0f0" stroke-width="1" stroke-dasharray="3 2" stroke-dashoffset="0" shape-rendering="crispEdges"/><line x1="80" y1="375.5" x2="311" y2="375.5" stroke="#c0f0f0" stroke-width="1" stroke-dasharray="3 2" stroke-dashoffset="0" shape-rendering="crispEdges"/><path d="M137 317L253 202M253 317L137 202" stroke="#fff" stroke-width="1"/><path d="M137 202l3 8 5-5z M253 202l-8 3 5 5z" fill="none" stroke="#fff" stroke-width="1"/></svg>
<div style="position:absolute;left:116px;top:178.6px;height:42px;font:normal 21px 'Liberation Sans', sans-serif;line-height:42px;color:#f0f0ff;white-space:nowrap;text-shadow:0 0 1px #fff;">W</div>
<div style="position:absolute;left:255.5px;top:178.6px;height:42px;font:normal 21px 'Liberation Sans', sans-serif;line-height:42px;color:#f0f0ff;white-space:nowrap;text-shadow:0 0 1px #fff;">V</div>
<div style="position:absolute;left:317px;top:183px;height:26px;font:bold 13px 'Liberation Sans', sans-serif;line-height:26px;color:#fff;white-space:nowrap;">1000 &micro;m</div>
<div style="position:absolute;left:317px;top:247px;height:26px;font:bold 13px 'Liberation Sans', sans-serif;line-height:26px;color:#fff;white-space:nowrap;">0</div>
<div style="position:absolute;left:317px;top:311px;height:26px;font:bold 13px 'Liberation Sans', sans-serif;line-height:26px;color:#fff;white-space:nowrap;">1000 &micro;m</div>
<div style="position:absolute;left:394.5px;top:110.5px;width:139.0px;height:95.0px;border:1px solid #d5dfe5;border-radius:3px;"></div>
<div style="position:absolute;left:401px;top:100.9px;height:19.2px;padding:0 3px;background:#f0f0f0;font:bold 16px 'Liberation Sans', sans-serif;line-height:19.2px;white-space:nowrap;">Centrod (&micro;m)</div>
<div style="position:absolute;left:404px;top:120px;height:48px;font:bold 24px 'Liberation Sans', sans-serif;line-height:48px;color:#000;white-space:nowrap;">X</div>
<div style="position:absolute;left:435.5px;top:130.5px;width:83.5px;height:26.5px;background:#000080;color:#fff;font:normal 23px 'Liberation Sans', sans-serif;line-height:26.5px;text-align:center;white-space:nowrap;">-85.99</div>
<div style="position:absolute;left:404px;top:158px;height:48px;font:bold 24px 'Liberation Sans', sans-serif;line-height:48px;color:#000;white-space:nowrap;">Y</div>
<div style="position:absolute;left:435.5px;top:168.5px;width:83.5px;height:26.5px;background:#000080;color:#fff;font:normal 23px 'Liberation Sans', sans-serif;line-height:26.5px;text-align:center;white-space:nowrap;">-180.0</div>
<div style="position:absolute;left:394.5px;top:220.5px;width:139.0px;height:162.5px;border:1px solid #d5dfe5;border-radius:3px;"></div>
<div style="position:absolute;left:401px;top:210.9px;height:19.2px;padding:0 3px;background:#f0f0f0;font:bold 16px 'Liberation Sans', sans-serif;line-height:19.2px;white-space:nowrap;">Diameter (&micro;m)</div>
<div style="position:absolute;left:228.5px;width:400px;text-align:center;top:224.6px;height:40px;font:bold 20px 'Liberation Sans', sans-serif;line-height:40px;color:#000;white-space:nowrap;">W</div>
<div style="position:absolute;left:291px;width:400px;text-align:center;top:224.6px;height:40px;font:bold 20px 'Liberation Sans', sans-serif;line-height:40px;color:#000;white-space:nowrap;">V</div>
<div style="position:absolute;left:263px;width:400px;text-align:center;top:250px;height:26px;font:bold 13px 'Liberation Sans', sans-serif;line-height:26px;color:#000;white-space:nowrap;">80.0%</div>
<div style="position:absolute;left:403.5px;top:272px;width:55.5px;height:19px;background:#000080;color:#fff;font:normal 16px 'Liberation Sans', sans-serif;line-height:19px;text-align:center;white-space:nowrap;">823.9</div>
<div style="position:absolute;left:471.5px;top:272px;width:55.5px;height:19px;background:#000080;color:#fff;font:normal 16px 'Liberation Sans', sans-serif;line-height:19px;text-align:center;white-space:nowrap;">894.1</div>
<div style="position:absolute;left:263px;width:400px;text-align:center;top:291.5px;height:26px;font:bold 13px 'Liberation Sans', sans-serif;line-height:26px;color:#000;white-space:nowrap;">50.0%</div>
<div style="position:absolute;left:403.5px;top:312.7px;width:55.5px;height:19.0px;background:#000080;color:#fff;font:normal 16px 'Liberation Sans', sans-serif;line-height:19.0px;text-align:center;white-space:nowrap;">1444</div>
<div style="position:absolute;left:471.5px;top:312.7px;width:55.5px;height:19.0px;background:#000080;color:#fff;font:normal 16px 'Liberation Sans', sans-serif;line-height:19.0px;text-align:center;white-space:nowrap;">1484</div>
<div style="position:absolute;left:263px;width:400px;text-align:center;top:332.8px;height:26px;font:bold 13px 'Liberation Sans', sans-serif;line-height:26px;color:#000;white-space:nowrap;">13.5%</div>
<div style="position:absolute;left:403.5px;top:352.5px;width:55.5px;height:19.0px;background:#000080;color:#fff;font:normal 16px 'Liberation Sans', sans-serif;line-height:19.0px;text-align:center;white-space:nowrap;">2471</div>
<div style="position:absolute;left:471.5px;top:352.5px;width:55.5px;height:19.0px;background:#000080;color:#fff;font:normal 16px 'Liberation Sans', sans-serif;line-height:19.0px;text-align:center;white-space:nowrap;">2499</div>
<div style="position:absolute;left:632px;top:66px;width:525px;height:354px;background:#d7e4f2;border:1px solid #3a3a3a;border-radius:6px 6px 0 0;"></div>
<div style="position:absolute;left:633px;top:67px;width:523px;height:352px;border:1px solid rgba(255,255,255,0.85);border-radius:5px 5px 0 0;"></div>
<div style="position:absolute;left:634px;top:68px;width:521px;height:28px;background:linear-gradient(#bccbdb,#d7e3f0);border-radius:4px 4px 0 0;"></div>
<div style="position:absolute;left:640px;top:96px;width:509px;height:316px;background:#f0f0f0;"></div>
<svg style="position:absolute;left:642px;top:76px;" width="16" height="16" viewBox="0 0 16 16"><rect width="16" height="16" fill="#c8c8c8"/><path d="M0.5 14.5H2.5Q4.3 14.5 5.3 10L6.8 3.5Q8 0.8 9.2 3.5L10.7 10Q11.7 14.5 13.5 14.5H15.5" stroke="#0000e0" fill="none" stroke-width="1.8"/></svg>
<div style="position:absolute;left:662px;top:71.5px;height:26px;font:normal 13px 'Liberation Sans', sans-serif;line-height:26px;color:#404040;white-space:nowrap;">Profile V</div>
<div style="position:absolute;left:1116.5px;top:76px;width:30.0px;height:16px;background:linear-gradient(#e4ecf5 0%,#d6e1ee 45%,#c5d4e6 50%,#d3e0ef 100%);border:1px solid #8596ab;border-radius:3px;"></div>
<svg style="position:absolute;left:1124.5px;top:78px;" width="14" height="12" viewBox="0 0 14 12"><path d="M3 2L11 10M11 2L3 10" stroke="#445" stroke-width="3.6"/><path d="M3 2L11 10M11 2L3 10" stroke="#fff" stroke-width="2"/></svg>
<div style="position:absolute;left:1083.5px;top:76px;width:30.0px;height:16px;background:linear-gradient(#e4ecf5 0%,#d6e1ee 45%,#c5d4e6 50%,#d3e0ef 100%);border:1px solid #8596ab;border-radius:3px;"></div>
<div style="position:absolute;left:1094.5px;top:80px;width:9.0px;height:8px;border:1px solid #445;background:#fff;"></div>
<div style="position:absolute;left:1096.5px;top:82px;width:5.0px;height:4px;border:1px solid #445;background:transparent;"></div>
<div style="position:absolute;left:1050.5px;top:76px;width:30.0px;height:16px;background:linear-gradient(#e4ecf5 0%,#d6e1ee 45%,#c5d4e6 50%,#d3e0ef 100%);border:1px solid #8596ab;border-radius:3px;"></div>
<div style="position:absolute;left:1059.5px;top:84px;width:12.0px;height:4px;border:1px solid #445;background:#fff;"></div>
<div style="position:absolute;left:685px;top:104px;width:309px;height:282px;background:#000080;"></div>
<svg style="position:absolute;left:0px;top:0px;" width="1382" height="784" viewBox="0 0 1382 784"><line x1="685" y1="104.5" x2="994" y2="104.5" stroke="#fff" stroke-width="1" stroke-dasharray="2 8" stroke-dashoffset="0" shape-rendering="crispEdges"/><line x1="685.5" y1="104" x2="685.5" y2="386" stroke="#fff" stroke-width="1" stroke-dasharray="2 8" stroke-dashoffset="0" shape-rendering="crispEdges"/><line x1="762.5" y1="104" x2="762.5" y2="386" stroke="#fff" stroke-width="1" stroke-dasharray="2 8" stroke-dashoffset="-3" shape-rendering="crispEdges"/><line x1="839.5" y1="104" x2="839.5" y2="386" stroke="#fff" stroke-width="1" stroke-dasharray="2 8" stroke-dashoffset="-3" shape-rendering="crispEdges"/><line x1="916.5" y1="104" x2="916.5" y2="386" stroke="#fff" stroke-width="1" stroke-dasharray="2 8" stroke-dashoffset="-3" shape-rendering="crispEdges"/><line x1="685" y1="217.5" x2="994" y2="217.5" stroke="#fff" stroke-width="1" stroke-dasharray="2 8" stroke-dashoffset="0" shape-rendering="crispEdges"/><line x1="685" y1="273.5" x2="994" y2="273.5" stroke="#fff" stroke-width="1" stroke-dasharray="2 8" stroke-dashoffset="0" shape-rendering="crispEdges"/><line x1="685" y1="330.5" x2="994" y2="330.5" stroke="#fff" stroke-width="1" stroke-dasharray="2 8" stroke-dashoffset="0" shape-rendering="crispEdges"/><line x1="685" y1="161.5" x2="994" y2="161.5" stroke="#008000" stroke-width="1" stroke-dasharray="3 2" stroke-dashoffset="0" shape-rendering="crispEdges"/><line x1="685" y1="245.5" x2="994" y2="245.5" stroke="#0000ff" stroke-width="1" stroke-dasharray="3 2" stroke-dashoffset="0" shape-rendering="crispEdges"/><line x1="685" y1="348.5" x2="994" y2="348.5" stroke="#ff0000" stroke-width="1" stroke-dasharray="3 2" stroke-dashoffset="0" shape-rendering="crispEdges"/><polyline points="755,386.2 760.6,384.8 766.2,377.8 774.7,363.8 780.3,346.9 787.3,327.3 791.5,310.4 796.6,293.6 799.9,268.3 803.3,243 805.5,214.9 808.4,192.5 811.3,178.6 812.9,170.4 813.9,159.2 815.4,153 817,147 819.5,140.8 822.6,133.7 822.6,129 825.6,121.9 828.7,117.9 831.2,113.3 831.2,110.2 836.3,105.1 839.4,105.1 841.4,107.1 844,112.2 845.5,117.3 847.6,121.4 848,125.5 850.6,131.6 851.6,136.7 853.7,141.8 855.2,149 856.7,154 856.7,161.2 858.8,167.3 860.8,178.6 865.9,198.1 872.9,231.8 878.6,257 884.2,288 892.6,318.8 901,349.7 909.5,372.2 915.1,380.6 920.7,377.8 926.3,386.2" fill="none" stroke="#ffff00" stroke-width="1" stroke-linejoin="round"/><path d="M685 386.5H994 M685.5 386v6 M993.5 386v6 M839.5 386v6" stroke="#000" stroke-width="1" shape-rendering="crispEdges"/></svg>
<div style="position:absolute;left:650px;top:92px;height:22px;font:normal 11px 'Liberation Mono', monospace;line-height:22px;color:#a0a0a0;white-space:nowrap;letter-spacing:-0.6px;">100%</div>
<div style="position:absolute;left:650px;top:150.3px;height:22px;font:normal 11px 'Liberation Mono', monospace;line-height:22px;color:#008000;white-space:nowrap;letter-spacing:-0.6px;">80.0%</div>
<div style="position:absolute;left:650px;top:206.6px;height:22px;font:normal 11px 'Liberation Mono', monospace;line-height:22px;color:#a0a0a0;white-space:nowrap;letter-spacing:-0.6px;">60%</div>
<div style="position:absolute;left:650px;top:234.75px;height:22px;font:normal 11px 'Liberation Mono', monospace;line-height:22px;color:#0000ff;white-space:nowrap;letter-spacing:-0.6px;">50.0%</div>
<div style="position:absolute;left:650px;top:262.9px;height:22px;font:normal 11px 'Liberation Mono', monospace;line-height:22px;color:#a0a0a0;white-space:nowrap;letter-spacing:-0.6px;">40%</div>
<div style="position:absolute;left:650px;top:319.2px;height:22px;font:normal 11px 'Liberation Mono', monospace;line-height:22px;color:#a0a0a0;white-space:nowrap;letter-spacing:-0.6px;">20%</div>
<div style="position:absolute;left:650px;top:337.4975px;height:22px;font:normal 11px 'Liberation Mono', monospace;line-height:22px;color:#ff0000;white-space:nowrap;letter-spacing:-0.6px;">13.5%</div>
<div style="position:absolute;left:650px;top:374px;height:22px;font:normal 11px 'Liberation Mono', monospace;line-height:22px;color:#a0a0a0;white-space:nowrap;letter-spacing:-0.6px;">0%</div>
<svg style="position:absolute;left:0px;top:0px;" width="1382" height="784" viewBox="0 0 1382 784"><path d="M722 385.5h3M750 385.5h3" stroke="#ffff00"/></svg>
<div style="position:absolute;left:687px;top:389px;height:26px;font:normal 13px 'Liberation Sans', sans-serif;line-height:26px;color:#000;white-space:nowrap;">3500</div>
<div style="position:absolute;left:639px;width:400px;text-align:center;top:389px;height:26px;font:normal 13px 'Liberation Sans', sans-serif;line-height:26px;color:#000;white-space:nowrap;">0(&micro;m)</div>
<div style="position:absolute;left:593px;width:400px;text-align:right;top:389px;height:26px;font:normal 13px 'Liberation Sans', sans-serif;line-height:26px;color:#000;white-space:nowrap;">3500</div>
<div style="position:absolute;left:878px;width:400px;text-align:center;top:101.7px;height:26px;font:bold 13px 'Liberation Sans', sans-serif;line-height:26px;color:#000;white-space:nowrap;">Width (&micro;m)</div>
<div style="position:absolute;left:1039px;top:122px;height:24px;font:bold 12px 'Liberation Sans', sans-serif;line-height:24px;color:#000;white-space:nowrap;">80.0%</div>
<div style="position:absolute;left:1036.5px;top:141px;width:89.0px;height:28.5px;background:#000080;color:#fff;font:normal 23px 'Liberation Sans', sans-serif;line-height:28.5px;text-align:center;white-space:nowrap;">894.1</div>
<div style="position:absolute;left:1039px;top:174.2px;height:24px;font:bold 12px 'Liberation Sans', sans-serif;line-height:24px;color:#000;white-space:nowrap;">50.0%</div>
<div style="position:absolute;left:1036.5px;top:193.5px;width:89.0px;height:28.5px;background:#000080;color:#fff;font:normal 23px 'Liberation Sans', sans-serif;line-height:28.5px;text-align:center;white-space:nowrap;">1484</div>
<div style="position:absolute;left:1039px;top:230px;height:24px;font:bold 12px 'Liberation Sans', sans-serif;line-height:24px;color:#000;white-space:nowrap;">13.5%</div>
<div style="position:absolute;left:1036.5px;top:249px;width:89.0px;height:28.5px;background:#000080;color:#fff;font:normal 23px 'Liberation Sans', sans-serif;line-height:28.5px;text-align:center;white-space:nowrap;">2499</div>
<div style="position:absolute;left:1015.5px;top:296px;width:119.0px;height:33.5px;border:1px solid #dcdcdc;border-radius:3px;"></div>
<div style="position:absolute;left:1023.5px;top:301.75px;height:22px;font:normal 11px 'Liberation Mono', monospace;line-height:22px;color:#000;white-space:nowrap;">Zoom:</div>
<div style="position:absolute;left:1064.5px;top:303px;width:61.5px;height:20px;background:#f0f0f0;border:1px solid #a0a0a0;"></div>
<div style="position:absolute;left:887.25px;width:400px;text-align:center;top:302.0px;height:22px;font:normal 11px 'Liberation Mono', monospace;line-height:22px;color:#000;white-space:nowrap;">None</div>
<div style="position:absolute;left:1110px;top:305px;width:14px;height:8.0px;border:1px solid #b0b8c0;background:linear-gradient(#f8f8f8,#e0e0e0);"></div>
<div style="position:absolute;left:1110px;top:313.0px;width:14px;height:8.0px;border:1px solid #b0b8c0;background:linear-gradient(#f8f8f8,#e0e0e0);"></div>
<svg style="position:absolute;left:1113px;top:307px;" width="8" height="14" viewBox="0 0 8 14"><path d="M1 5l3-3 3 3z M1 9l3 3 3-3z" fill="#3c5c8c"/></svg>
<div style="position:absolute;left:1035px;top:342px;width:79.5px;height:20.5px;background:linear-gradient(#f2f2f2 0%,#ebebeb 50%,#dddddd 51%,#cfcfcf 100%);border:1px solid #707070;border-radius:3px;"></div><div style="position:absolute;left:874.75px;width:400px;text-align:center;top:341.25px;height:22px;font:normal 11px 'Liberation Mono', monospace;line-height:22px;color:#000;white-space:nowrap;">Gaussian</div>
<div style="position:absolute;left:1035px;top:371.5px;width:79.5px;height:21.0px;background:linear-gradient(#f4f4f4 0%,#ebebeb 50%,#dddddd 51%,#cfcfcf 100%);border:1px solid #3c9fd8;box-shadow:inset 0 0 0 1px #8ad4f8;border-radius:3px;"></div><div style="position:absolute;left:874.75px;width:400px;text-align:center;top:371.0px;height:22px;font:normal 11px 'Liberation Mono', monospace;line-height:22px;color:#000;white-space:nowrap;">Setup</div>
<div style="position:absolute;left:639px;top:420px;width:521px;height:380px;background:#d7e4f2;border:1px solid #3a3a3a;border-radius:6px 6px 0 0;"></div>
<div style="position:absolute;left:640px;top:421px;width:519px;height:378px;border:1px solid rgba(255,255,255,0.85);border-radius:5px 5px 0 0;"></div>
<div style="position:absolute;left:641px;top:422px;width:517px;height:28px;background:linear-gradient(#bccbdb,#d7e3f0);border-radius:4px 4px 0 0;"></div>
<div style="position:absolute;left:647px;top:450px;width:505px;height:342px;background:#f0f0f0;"></div>
<svg style="position:absolute;left:649px;top:430px;" width="16" height="16" viewBox="0 0 16 16"><rect width="16" height="16" fill="#c8c8c8"/><path d="M0.5 14.5H2.5Q4.3 14.5 5.3 10L6.8 3.5Q8 0.8 9.2 3.5L10.7 10Q11.7 14.5 13.5 14.5H15.5" stroke="#0000e0" fill="none" stroke-width="1.8"/></svg>
<div style="position:absolute;left:669px;top:425.5px;height:26px;font:normal 13px 'Liberation Sans', sans-serif;line-height:26px;color:#404040;white-space:nowrap;">Profile W</div>
<div style="position:absolute;left:1119.5px;top:430px;width:30.0px;height:16px;background:linear-gradient(#e4ecf5 0%,#d6e1ee 45%,#c5d4e6 50%,#d3e0ef 100%);border:1px solid #8596ab;border-radius:3px;"></div>
<svg style="position:absolute;left:1127.5px;top:432px;" width="14" height="12" viewBox="0 0 14 12"><path d="M3 2L11 10M11 2L3 10" stroke="#445" stroke-width="3.6"/><path d="M3 2L11 10M11 2L3 10" stroke="#fff" stroke-width="2"/></svg>
<div style="position:absolute;left:1086.5px;top:430px;width:30.0px;height:16px;background:linear-gradient(#e4ecf5 0%,#d6e1ee 45%,#c5d4e6 50%,#d3e0ef 100%);border:1px solid #8596ab;border-radius:3px;"></div>
<div style="position:absolute;left:1097.5px;top:434px;width:9.0px;height:8px;border:1px solid #445;background:#fff;"></div>
<div style="position:absolute;left:1099.5px;top:436px;width:5.0px;height:4px;border:1px solid #445;background:transparent;"></div>
<div style="position:absolute;left:1053.5px;top:430px;width:30.0px;height:16px;background:linear-gradient(#e4ecf5 0%,#d6e1ee 45%,#c5d4e6 50%,#d3e0ef 100%);border:1px solid #8596ab;border-radius:3px;"></div>
<div style="position:absolute;left:1062.5px;top:438px;width:12.0px;height:4px;border:1px solid #445;background:#fff;"></div>
<div style="position:absolute;left:692px;top:458px;width:305px;height:282px;background:#8080ff;"></div>
<svg style="position:absolute;left:0px;top:0px;" width="1382" height="784" viewBox="0 0 1382 784"><line x1="692" y1="458.5" x2="997" y2="458.5" stroke="#fff" stroke-width="1" stroke-dasharray="2 8" stroke-dashoffset="0" shape-rendering="crispEdges"/><line x1="692.5" y1="458" x2="692.5" y2="740" stroke="#fff" stroke-width="1" stroke-dasharray="2 8" stroke-dashoffset="0" shape-rendering="crispEdges"/><line x1="768.5" y1="458" x2="768.5" y2="740" stroke="#fff" stroke-width="1" stroke-dasharray="2 8" stroke-dashoffset="-3" shape-rendering="crispEdges"/><line x1="844.5" y1="458" x2="844.5" y2="740" stroke="#fff" stroke-width="1" stroke-dasharray="2 8" stroke-dashoffset="-3" shape-rendering="crispEdges"/><line x1="920.5" y1="458" x2="920.5" y2="740" stroke="#fff" stroke-width="1" stroke-dasharray="2 8" stroke-dashoffset="-3" shape-rendering="crispEdges"/><line x1="692" y1="571.5" x2="997" y2="571.5" stroke="#fff" stroke-width="1" stroke-dasharray="2 8" stroke-dashoffset="0" shape-rendering="crispEdges"/><line x1="692" y1="627.5" x2="997" y2="627.5" stroke="#fff" stroke-width="1" stroke-dasharray="2 8" stroke-dashoffset="0" shape-rendering="crispEdges"/><line x1="692" y1="684.5" x2="997" y2="684.5" stroke="#fff" stroke-width="1" stroke-dasharray="2 8" stroke-dashoffset="0" shape-rendering="crispEdges"/><line x1="692" y1="515.5" x2="997" y2="515.5" stroke="#008000" stroke-width="1" stroke-dasharray="3 2" stroke-dashoffset="0" shape-rendering="crispEdges"/><line x1="692" y1="599.5" x2="997" y2="599.5" stroke="#0000ff" stroke-width="1" stroke-dasharray="3 2" stroke-dashoffset="0" shape-rendering="crispEdges"/><line x1="692" y1="702.5" x2="997" y2="702.5" stroke="#ff0000" stroke-width="1" stroke-dasharray="3 2" stroke-dashoffset="0" shape-rendering="crispEdges"/><polyline points="765.6,739.7 776.9,730.3 784.5,702 793.9,668.2 801.4,634.3 810.8,599 816.4,570.4 822.1,540.3 827.7,514.7 833.4,487.6 839,466.9 845.8,459.4 852.2,465 859.7,474.5 863.5,487.6 869.1,514.7 874.8,547.8 879.6,599 886,638.1 893.6,672 903,702 914.3,720.9 925.5,736 936.8,739.7" fill="none" stroke="#ffff00" stroke-width="1" stroke-linejoin="round"/><polyline points="745.0,739.1 746.0,739.0 747.0,738.9 748.0,738.7 749.0,738.5 750.0,738.4 751.0,738.1 752.0,737.9 753.0,737.7 754.0,737.4 755.0,737.1 756.0,736.8 757.0,736.4 758.0,736.0 759.0,735.6 760.0,735.1 761.0,734.6 762.0,734.1 763.0,733.5 764.0,732.8 765.0,732.1 766.0,731.4 767.0,730.6 768.0,729.7 769.0,728.8 770.0,727.8 771.0,726.7 772.0,725.5 773.0,724.3 774.0,722.9 775.0,721.5 776.0,720.0 777.0,718.4 778.0,716.7 779.0,714.9 780.0,712.9 781.0,710.9 782.0,708.7 783.0,706.5 784.0,704.1 785.0,701.5 786.0,698.9 787.0,696.1 788.0,693.1 789.0,690.1 790.0,686.9 791.0,683.5 792.0,680.0 793.0,676.4 794.0,672.6 795.0,668.7 796.0,664.6 797.0,660.4 798.0,656.1 799.0,651.6 800.0,647.0 801.0,642.3 802.0,637.4 803.0,632.5 804.0,627.4 805.0,622.2 806.0,616.9 807.0,611.5 808.0,606.0 809.0,600.5 810.0,594.9 811.0,589.2 812.0,583.5 813.0,577.8 814.0,572.0 815.0,566.3 816.0,560.5 817.0,554.8 818.0,549.1 819.0,543.4 820.0,537.9 821.0,532.4 822.0,526.9 823.0,521.6 824.0,516.4 825.0,511.4 826.0,506.5 827.0,501.7 828.0,497.2 829.0,492.8 830.0,488.7 831.0,484.7 832.0,481.0 833.0,477.6 834.0,474.3 835.0,471.4 836.0,468.7 837.0,466.4 838.0,464.3 839.0,462.5 840.0,461.0 841.0,459.8 842.0,459.0 843.0,458.4 844.0,458.2 845.0,458.3 846.0,458.7 847.0,459.5 848.0,460.5 849.0,461.9 850.0,463.5 851.0,465.5 852.0,467.8 853.0,470.3 854.0,473.1 855.0,476.2 856.0,479.6 857.0,483.2 858.0,487.1 859.0,491.1 860.0,495.4 861.0,499.9 862.0,504.6 863.0,509.4 864.0,514.4 865.0,519.5 866.0,524.8 867.0,530.2 868.0,535.6 869.0,541.2 870.0,546.8 871.0,552.5 872.0,558.2 873.0,564.0 874.0,569.7 875.0,575.5 876.0,581.2 877.0,586.9 878.0,592.6 879.0,598.3 880.0,603.8 881.0,609.3 882.0,614.7 883.0,620.1 884.0,625.3 885.0,630.4 886.0,635.5 887.0,640.4 888.0,645.1 889.0,649.8 890.0,654.3 891.0,658.7 892.0,663.0 893.0,667.1 894.0,671.1 895.0,674.9 896.0,678.6 897.0,682.1 898.0,685.5 899.0,688.8 900.0,691.9 901.0,694.9 902.0,697.8 903.0,700.5 904.0,703.1 905.0,705.5 906.0,707.8 907.0,710.0 908.0,712.1 909.0,714.1 910.0,716.0 911.0,717.7 912.0,719.4 913.0,720.9 914.0,722.4 915.0,723.7 916.0,725.0 917.0,726.2 918.0,727.3 919.0,728.4 920.0,729.3 921.0,730.2 922.0,731.1 923.0,731.9 924.0,732.6 925.0,733.2 926.0,733.8 927.0,734.4 928.0,734.9 929.0,735.4 930.0,735.9 931.0,736.3 932.0,736.6 933.0,737.0 934.0,737.3 935.0,737.6 936.0,737.8 937.0,738.1 938.0,738.3 939.0,738.5 940.0,738.6 941.0,738.8 942.0,739.0 943.0,739.1 944.0,739.2 945.0,739.3 946.0,739.4 947.0,739.5 948.0,739.6" fill="none" stroke="#ff0000" stroke-width="1" stroke-linejoin="round"/><path d="M692 740.5H997 M692.5 740v6 M996.5 740v6 M844.5 740v6" stroke="#000" stroke-width="1" shape-rendering="crispEdges"/></svg>
<div style="position:absolute;left:657px;top:446px;height:22px;font:normal 11px 'Liberation Mono', monospace;line-height:22px;color:#a0a0a0;white-space:nowrap;letter-spacing:-0.6px;">100%</div>
<div style="position:absolute;left:657px;top:504.29999999999995px;height:22px;font:normal 11px 'Liberation Mono', monospace;line-height:22px;color:#008000;white-space:nowrap;letter-spacing:-0.6px;">80.0%</div>
<div style="position:absolute;left:657px;top:560.6px;height:22px;font:normal 11px 'Liberation Mono', monospace;line-height:22px;color:#a0a0a0;white-space:nowrap;letter-spacing:-0.6px;">60%</div>
<div style="position:absolute;left:657px;top:588.75px;height:22px;font:normal 11px 'Liberation Mono', monospace;line-height:22px;color:#0000ff;white-space:nowrap;letter-spacing:-0.6px;">50.0%</div>
<div style="position:absolute;left:657px;top:616.9px;height:22px;font:normal 11px 'Liberation Mono', monospace;line-height:22px;color:#a0a0a0;white-space:nowrap;letter-spacing:-0.6px;">40%</div>
<div style="position:absolute;left:657px;top:673.2px;height:22px;font:normal 11px 'Liberation Mono', monospace;line-height:22px;color:#a0a0a0;white-space:nowrap;letter-spacing:-0.6px;">20%</div>
<div style="position:absolute;left:657px;top:691.4975px;height:22px;font:normal 11px 'Liberation Mono', monospace;line-height:22px;color:#ff0000;white-space:nowrap;letter-spacing:-0.6px;">13.5%</div>
<div style="position:absolute;left:657px;top:728px;height:22px;font:normal 11px 'Liberation Mono', monospace;line-height:22px;color:#a0a0a0;white-space:nowrap;letter-spacing:-0.6px;">0%</div>
<div style="position:absolute;left:692px;top:742.5px;height:26px;font:normal 13px 'Liberation Sans', sans-serif;line-height:26px;color:#000;white-space:nowrap;">3500</div>
<div style="position:absolute;left:644px;width:400px;text-align:center;top:742.5px;height:26px;font:normal 13px 'Liberation Sans', sans-serif;line-height:26px;color:#000;white-space:nowrap;">0(&micro;m)</div>
<div style="position:absolute;left:596px;width:400px;text-align:right;top:742.5px;height:26px;font:normal 13px 'Liberation Sans', sans-serif;line-height:26px;color:#000;white-space:nowrap;">3500</div>
<div style="position:absolute;left:880.7px;width:400px;text-align:center;top:451.6px;height:26px;font:bold 13px 'Liberation Sans', sans-serif;line-height:26px;color:#000;white-space:nowrap;">Gaussian</div>
<div style="position:absolute;left:880.7px;width:400px;text-align:center;top:468.6px;height:26px;font:bold 13px 'Liberation Sans', sans-serif;line-height:26px;color:#000;white-space:nowrap;">correlation(%)</div>
<div style="position:absolute;left:1050px;top:492.3px;width:56px;height:19.69999999999999px;background:#8080ff;color:#fff;font:normal 19px 'Liberation Sans', sans-serif;line-height:19.69999999999999px;text-align:center;white-space:nowrap;">93.73</div>
<div style="position:absolute;left:843.7px;width:400px;text-align:center;top:510.6px;height:26px;font:bold 13px 'Liberation Sans', sans-serif;line-height:26px;color:#000;white-space:nowrap;">Prof.</div>
<div style="position:absolute;left:843.7px;width:400px;text-align:center;top:524.9px;height:26px;font:bold 13px 'Liberation Sans', sans-serif;line-height:26px;color:#000;white-space:nowrap;">(&micro;m)</div>
<div style="position:absolute;left:911.5999999999999px;width:400px;text-align:center;top:510.6px;height:26px;font:bold 13px 'Liberation Sans', sans-serif;line-height:26px;color:#000;white-space:nowrap;">Gauss.</div>
<div style="position:absolute;left:911.5999999999999px;width:400px;text-align:center;top:524.9px;height:26px;font:bold 13px 'Liberation Sans', sans-serif;line-height:26px;color:#000;white-space:nowrap;">(&micro;m)</div>
<div style="position:absolute;left:878.2px;width:400px;text-align:center;top:541.4px;height:25.0px;font:bold 12.5px 'Liberation Sans', sans-serif;line-height:25.0px;color:#000;white-space:nowrap;">80.0%</div>
<div style="position:absolute;left:1018px;top:562.2px;width:56px;height:19.799999999999955px;background:#8080ff;color:#fff;font:normal 16px 'Liberation Sans', sans-serif;line-height:19.799999999999955px;text-align:center;white-space:nowrap;border-top:1px solid #a0a0a0;border-left:1px solid #a0a0a0;">823.9</div>
<div style="position:absolute;left:1086.5px;top:562.2px;width:55.5px;height:19.799999999999955px;background:#8080ff;color:#fff;font:normal 16px 'Liberation Sans', sans-serif;line-height:19.799999999999955px;text-align:center;white-space:nowrap;border-top:1px solid #a0a0a0;border-left:1px solid #a0a0a0;">830.9</div>
<div style="position:absolute;left:1018px;top:596.8px;width:56px;height:17.40000000000009px;background:#8080ff;color:#fff;font:normal 16px 'Liberation Sans', sans-serif;line-height:17.40000000000009px;text-align:center;white-space:nowrap;border-left:1px solid #a0a0a0;">1444</div>
<div style="position:absolute;left:1086.5px;top:594.4px;width:55.5px;height:19.800000000000068px;background:#8080ff;color:#fff;font:normal 16px 'Liberation Sans', sans-serif;line-height:19.800000000000068px;text-align:center;white-space:nowrap;border-top:1px solid #a0a0a0;border-left:1px solid #a0a0a0;">1464</div>
<div style="position:absolute;left:878.2px;width:400px;text-align:center;top:578.3px;height:25.0px;font:bold 12.5px 'Liberation Sans', sans-serif;line-height:25.0px;color:#000;white-space:nowrap;">50.0%</div>
<div style="position:absolute;left:1018px;top:629px;width:56px;height:14px;background:#8080ff;color:#fff;font:normal 15.5px 'Liberation Sans', sans-serif;line-height:14px;text-align:center;white-space:nowrap;line-height:15px;">2471</div>
<div style="position:absolute;left:1086.5px;top:626px;width:55.5px;height:20px;background:#8080ff;color:#fff;font:normal 15.5px 'Liberation Sans', sans-serif;line-height:20px;text-align:center;white-space:nowrap;line-height:19px;border-top:1px solid #a0a0a0;border-left:1px solid #a0a0a0;">2489</div>
<div style="position:absolute;left:878.2px;width:400px;text-align:center;top:610.5px;height:25.0px;font:bold 12.5px 'Liberation Sans', sans-serif;line-height:25.0px;color:#000;white-space:nowrap;">13.5%</div>
<div style="position:absolute;left:1018.3px;top:650.7px;width:119.20000000000005px;height:32.59999999999991px;border:1px solid #dcdcdc;border-radius:3px;"></div>
<div style="position:absolute;left:1026.3px;top:656.0px;height:22px;font:normal 11px 'Liberation Mono', monospace;line-height:22px;color:#000;white-space:nowrap;">Zoom:</div>
<div style="position:absolute;left:1068px;top:657.3px;width:62px;height:20.100000000000023px;background:#f0f0f0;border:1px solid #a0a0a0;"></div>
<div style="position:absolute;left:891.0px;width:400px;text-align:center;top:656.3499999999999px;height:22px;font:normal 11px 'Liberation Mono', monospace;line-height:22px;color:#000;white-space:nowrap;">None</div>
<div style="position:absolute;left:1114px;top:659.3px;width:14px;height:8.049999999999955px;border:1px solid #b0b8c0;background:linear-gradient(#f8f8f8,#e0e0e0);"></div>
<div style="position:absolute;left:1114px;top:667.3499999999999px;width:14px;height:8.050000000000068px;border:1px solid #b0b8c0;background:linear-gradient(#f8f8f8,#e0e0e0);"></div>
<svg style="position:absolute;left:1117px;top:661.3px;" width="8" height="14" viewBox="0 0 8 14"><path d="M1 5l3-3 3 3z M1 9l3 3 3-3z" fill="#3c5c8c"/></svg>
<div style="position:absolute;left:1038.4px;top:696.2px;width:79.29999999999995px;height:20.799999999999955px;background:linear-gradient(#eaf6fd 0%,#d9f0fc 50%,#bee6fd 51%,#a7d9f5 100%);border:1px solid #3c7fb1;border-radius:3px;"></div><div style="position:absolute;left:878.0500000000002px;width:400px;text-align:center;top:695.6px;height:22px;font:normal 11px 'Liberation Mono', monospace;line-height:22px;color:#000;white-space:nowrap;">Gaussian</div>
<div style="position:absolute;left:1038.4px;top:726.2px;width:79.29999999999995px;height:20.299999999999955px;background:linear-gradient(#f4f4f4 0%,#ebebeb 50%,#dddddd 51%,#cfcfcf 100%);border:1px solid #3c9fd8;box-shadow:inset 0 0 0 1px #8ad4f8;border-radius:3px;"></div><div style="position:absolute;left:878.0500000000002px;width:400px;text-align:center;top:725.35px;height:22px;font:normal 11px 'Liberation Mono', monospace;line-height:22px;color:#000;white-space:nowrap;">Setup</div>
<div style="position:absolute;left:28px;top:389px;width:525px;height:411px;background:#b9d1ea;border:1px solid #1a1a1a;border-radius:6px 6px 0 0;"></div>
<div style="position:absolute;left:29px;top:390px;width:523px;height:409px;border:1px solid rgba(255,255,255,0.85);border-radius:5px 5px 0 0;"></div>
<div style="position:absolute;left:30px;top:391px;width:521px;height:28px;background:linear-gradient(#93b1d0,#b9d2ec);border-radius:4px 4px 0 0;"></div>
<div style="position:absolute;left:36px;top:419px;width:509px;height:373px;background:#f0f0f0;"></div>
<svg style="position:absolute;left:38px;top:399px;" width="16" height="16" viewBox="0 0 16 16"><rect width="16" height="16" fill="#c8c8c8"/><circle cx="8" cy="8" r="7" fill="#fff" stroke="#000" stroke-width="1.3"/><path d="M8 1v14M1 8h14" stroke="#000" stroke-width="1.3"/><path d="M9.5 4.5h4M11.5 2.5v4" stroke="#e00000" stroke-width="1.3"/></svg>
<div style="position:absolute;left:58px;top:394.5px;height:26px;font:normal 13px 'Liberation Sans', sans-serif;line-height:26px;color:#000;white-space:nowrap;">Position</div>
<div style="position:absolute;left:512.5px;top:399px;width:30.0px;height:16px;background:linear-gradient(#e8a493 0%,#d98a78 45%,#c0462f 50%,#d4715a 100%);border:1px solid #6e2c22;border-radius:3px;"></div>
<svg style="position:absolute;left:520.5px;top:401px;" width="14" height="12" viewBox="0 0 14 12"><path d="M3 2L11 10M11 2L3 10" stroke="#445" stroke-width="3.6"/><path d="M3 2L11 10M11 2L3 10" stroke="#fff" stroke-width="2"/></svg>
<div style="position:absolute;left:479.5px;top:399px;width:30.0px;height:16px;background:linear-gradient(#e4ecf5 0%,#d6e1ee 45%,#c5d4e6 50%,#d3e0ef 100%);border:1px solid #8596ab;border-radius:3px;"></div>
<div style="position:absolute;left:490.5px;top:403px;width:9.0px;height:8px;border:1px solid #445;background:#fff;"></div>
<div style="position:absolute;left:492.5px;top:405px;width:5.0px;height:4px;border:1px solid #445;background:transparent;"></div>
<div style="position:absolute;left:446.5px;top:399px;width:30.0px;height:16px;background:linear-gradient(#e4ecf5 0%,#d6e1ee 45%,#c5d4e6 50%,#d3e0ef 100%);border:1px solid #8596ab;border-radius:3px;"></div>
<div style="position:absolute;left:455.5px;top:407px;width:12.0px;height:4px;border:1px solid #445;background:#fff;"></div>
<div style="position:absolute;left:43px;top:426px;width:347px;height:374px;background:#000080;border-top:1px solid #fff;border-left:1px solid #fff;"></div>
<svg style="position:absolute;left:0px;top:0px;" width="1382" height="784" viewBox="0 0 1382 784"><path d="M49.5 460V740.5 M49.5 460.5h8 M49.5 488.5h8 M49.5 516.5h8 M49.5 544.5h8 M49.5 572.5h8 M49.5 600.5h8 M49.5 628.5h8 M49.5 656.5h8 M49.5 684.5h8 M49.5 712.5h8 M49.5 740.5h8" stroke="#b8b8b8" fill="none" shape-rendering="crispEdges"/><line x1="77.5" y1="460" x2="77.5" y2="741" stroke="#c0c0c0" stroke-width="1" stroke-dasharray="2 8" stroke-dashoffset="-3" shape-rendering="crispEdges"/><line x1="77" y1="460.5" x2="358" y2="460.5" stroke="#c0c0c0" stroke-width="1" stroke-dasharray="2 8" stroke-dashoffset="-3" shape-rendering="crispEdges"/><line x1="105.5" y1="460" x2="105.5" y2="741" stroke="#c0c0c0" stroke-width="1" stroke-dasharray="2 8" stroke-dashoffset="-3" shape-rendering="crispEdges"/><line x1="77" y1="488.5" x2="358" y2="488.5" stroke="#c0c0c0" stroke-width="1" stroke-dasharray="2 8" stroke-dashoffset="-3" shape-rendering="crispEdges"/><line x1="133.5" y1="460" x2="133.5" y2="741" stroke="#c0c0c0" stroke-width="1" stroke-dasharray="2 8" stroke-dashoffset="-3" shape-rendering="crispEdges"/><line x1="77" y1="516.5" x2="358" y2="516.5" stroke="#c0c0c0" stroke-width="1" stroke-dasharray="2 8" stroke-dashoffset="-3" shape-rendering="crispEdges"/><line x1="161.5" y1="460" x2="161.5" y2="741" stroke="#c0c0c0" stroke-width="1" stroke-dasharray="2 8" stroke-dashoffset="-3" shape-rendering="crispEdges"/><line x1="77" y1="544.5" x2="358" y2="544.5" stroke="#c0c0c0" stroke-width="1" stroke-dasharray="2 8" stroke-dashoffset="-3" shape-rendering="crispEdges"/><line x1="189.5" y1="460" x2="189.5" y2="741" stroke="#c0c0c0" stroke-width="1" stroke-dasharray="2 8" stroke-dashoffset="-3" shape-rendering="crispEdges"/><line x1="77" y1="572.5" x2="358" y2="572.5" stroke="#c0c0c0" stroke-width="1" stroke-dasharray="2 8" stroke-dashoffset="-3" shape-rendering="crispEdges"/><line x1="217.5" y1="460" x2="217.5" y2="741" stroke="#c0c0c0" stroke-width="1" stroke-dasharray="2 8" stroke-dashoffset="-3" shape-rendering="crispEdges"/><line x1="77" y1="600.5" x2="358" y2="600.5" stroke="#c0c0c0" stroke-width="1" stroke-dasharray="2 8" stroke-dashoffset="-3" shape-rendering="crispEdges"/><line x1="245.5" y1="460" x2="245.5" y2="741" stroke="#c0c0c0" stroke-width="1" stroke-dasharray="2 8" stroke-dashoffset="-3" shape-rendering="crispEdges"/><line x1="77" y1="628.5" x2="358" y2="628.5" stroke="#c0c0c0" stroke-width="1" stroke-dasharray="2 8" stroke-dashoffset="-3" shape-rendering="crispEdges"/><line x1="273.5" y1="460" x2="273.5" y2="741" stroke="#c0c0c0" stroke-width="1" stroke-dasharray="2 8" stroke-dashoffset="-3" shape-rendering="crispEdges"/><line x1="77" y1="656.5" x2="358" y2="656.5" stroke="#c0c0c0" stroke-width="1" stroke-dasharray="2 8" stroke-dashoffset="-3" shape-rendering="crispEdges"/><line x1="301.5" y1="460" x2="301.5" y2="741" stroke="#c0c0c0" stroke-width="1" stroke-dasharray="2 8" stroke-dashoffset="-3" shape-rendering="crispEdges"/><line x1="77" y1="684.5" x2="358" y2="684.5" stroke="#c0c0c0" stroke-width="1" stroke-dasharray="2 8" stroke-dashoffset="-3" shape-rendering="crispEdges"/><line x1="329.5" y1="460" x2="329.5" y2="741" stroke="#c0c0c0" stroke-width="1" stroke-dasharray="2 8" stroke-dashoffset="-3" shape-rendering="crispEdges"/><line x1="77" y1="712.5" x2="358" y2="712.5" stroke="#c0c0c0" stroke-width="1" stroke-dasharray="2 8" stroke-dashoffset="-3" shape-rendering="crispEdges"/><line x1="357.5" y1="460" x2="357.5" y2="741" stroke="#c0c0c0" stroke-width="1" stroke-dasharray="2 8" stroke-dashoffset="-3" shape-rendering="crispEdges"/><line x1="77" y1="740.5" x2="358" y2="740.5" stroke="#c0c0c0" stroke-width="1" stroke-dasharray="2 8" stroke-dashoffset="-3" shape-rendering="crispEdges"/><circle cx="217.4" cy="600.2" r="140" stroke="#ffff00" stroke-width="2.2" fill="none"/><path d="M77 600H358 M217 460V741" stroke="#ffff00" stroke-width="2" shape-rendering="crispEdges"/><circle cx="217" cy="600" r="2.5" fill="#ffff00"/><path d="M153 663L281 537M281 663L153 537" stroke="#ffff00" stroke-width="1"/><path d="M153 537l3.5 9 5.5-5.5z M281 537l-9 3.5 5.5 5.5z" fill="#000080" stroke="#ffff00" stroke-width="1"/><path d="M323.9 597.4L325.5 619.5M322.5 642.6L315.5 663.7M303.9 683.9L289.3 700.6M271.0 714.9L251.1 724.8M228.6 730.9L206.5 732.5M183.4 729.5L162.3 722.5M142.1 710.9L125.4 696.3M111.1 678.0L101.2 658.1M95.1 635.6L93.5 613.5M96.5 590.4L103.5 569.3M115.1 549.1L129.7 532.4M148.0 518.1L167.9 508.2M190.4 502.1L212.5 500.5M235.6 503.5L256.7 510.5M276.9 522.1L293.6 536.7M307.9 555.0L317.8 574.9" stroke="#a0ff70" stroke-width="1.1" fill="none"/><path d="M203 617.5h11M208.5 612v11" stroke="#ffff00" stroke-width="1"/></svg>
<div style="position:absolute;left:131px;top:512.6px;height:42px;font:normal 21px 'Liberation Sans', sans-serif;line-height:42px;color:#ffff00;white-space:nowrap;">W</div>
<div style="position:absolute;left:281px;top:512.6px;height:42px;font:normal 21px 'Liberation Sans', sans-serif;line-height:42px;color:#ffff00;white-space:nowrap;">V</div>
<div style="position:absolute;left:63px;top:453px;height:16px;background:#000080;font:bold 13px 'Liberation Sans', sans-serif;line-height:16px;color:#ffff00;white-space:nowrap;">1500(&micro;m)</div>
<div style="position:absolute;left:64px;top:587px;height:26px;font:bold 13px 'Liberation Sans', sans-serif;line-height:26px;color:#ffff00;white-space:nowrap;">0</div>
<div style="position:absolute;left:68px;top:736.5px;height:26px;font:bold 13px 'Liberation Sans', sans-serif;line-height:26px;color:#ffff00;white-space:nowrap;">1500</div>
<div style="position:absolute;left:17.5px;width:400px;text-align:center;top:736.5px;height:26px;font:bold 13px 'Liberation Sans', sans-serif;line-height:26px;color:#ffff00;white-space:nowrap;">0</div>
<div style="position:absolute;left:-12px;width:400px;text-align:right;top:736.5px;height:26px;font:bold 13px 'Liberation Sans', sans-serif;line-height:26px;color:#ffff00;white-space:nowrap;">1500(&micro;m)</div>
<div style="position:absolute;left:402.5px;top:432.5px;width:139.0px;height:94.5px;border:1px solid #d5dfe5;border-radius:3px;"></div>
<div style="position:absolute;left:410px;top:422.9px;height:19.2px;padding:0 3px;background:#f0f0f0;font:bold 16px 'Liberation Sans', sans-serif;line-height:19.2px;white-space:nowrap;">Centrod (&micro;m)</div>
<div style="position:absolute;left:413px;top:442.5px;height:48px;font:bold 24px 'Liberation Sans', sans-serif;line-height:48px;color:#000;white-space:nowrap;">X</div>
<div style="position:absolute;left:443.5px;top:452.5px;width:83.5px;height:26.5px;background:#000080;color:#ffff00;font:normal 23px 'Liberation Sans', sans-serif;line-height:26.5px;text-align:center;white-space:nowrap;">-85.99</div>
<div style="position:absolute;left:413px;top:479.7px;height:48px;font:bold 24px 'Liberation Sans', sans-serif;line-height:48px;color:#000;white-space:nowrap;">Y</div>
<div style="position:absolute;left:443.5px;top:490.5px;width:83.5px;height:26.5px;background:#000080;color:#ffff00;font:normal 23px 'Liberation Sans', sans-serif;line-height:26.5px;text-align:center;white-space:nowrap;">-180.0</div>
<div style="position:absolute;left:402.5px;top:543.5px;width:139.0px;height:197.5px;border:1px solid #d5dfe5;border-radius:3px;"></div>
<div style="position:absolute;left:410px;top:533.9px;height:19.2px;padding:0 3px;background:#f0f0f0;font:bold 16px 'Liberation Sans', sans-serif;line-height:19.2px;white-space:nowrap;">Ellipse Data</div>
<div style="position:absolute;left:266px;width:400px;text-align:center;top:558.2px;height:31.0px;font:bold 15.5px 'Liberation Sans', sans-serif;line-height:31.0px;color:#000;white-space:nowrap;">major axis (&micro;m)</div>
<div style="position:absolute;left:437.5px;top:589.7px;width:68.5px;height:21.299999999999955px;background:#000080;color:#ffff00;font:normal 17px 'Liberation Sans', sans-serif;line-height:21.299999999999955px;text-align:center;white-space:nowrap;">2515</div>
<div style="position:absolute;left:266px;width:400px;text-align:center;top:615.0px;height:31.0px;font:bold 15.5px 'Liberation Sans', sans-serif;line-height:31.0px;color:#000;white-space:nowrap;">minor axis (&micro;m)</div>
<div style="position:absolute;left:437.5px;top:647.5px;width:68.5px;height:21.5px;background:#000080;color:#ffff00;font:normal 17px 'Liberation Sans', sans-serif;line-height:21.5px;text-align:center;white-space:nowrap;">2454</div>
<div style="position:absolute;left:272.5px;width:400px;text-align:center;top:677.3px;height:31.0px;font:bold 15.5px 'Liberation Sans', sans-serif;line-height:31.0px;color:#000;white-space:nowrap;">orientation (&deg;)</div>
<div style="position:absolute;left:437.5px;top:709.7px;width:68.5px;height:21.299999999999955px;background:#000080;color:#ffff00;font:normal 17px 'Liberation Sans', sans-serif;line-height:21.299999999999955px;text-align:center;white-space:nowrap;">77</div>
<div style="position:absolute;left:431px;top:749.5px;width:80px;height:20.5px;border:1px solid #3c9fd8;border-radius:3px;background:#ececec;"></div></div>
<div style="position:absolute;left:8px;top:752px;width:1366px;height:24px;background:#f0f0f0;border-top:1px solid #fff;"></div>
<div style="position:absolute;left:29px;top:5.5px;height:25.0px;font:normal 12.5px 'Liberation Sans', sans-serif;line-height:25.0px;color:#000;white-space:nowrap;">BeamAnalyzer USB&nbsp; (BA7-IR3E) S/N# ba9703</div>
<svg style="position:absolute;left:9px;top:12px" width="15" height="15" viewBox="0 0 15 15"><circle cx="7.5" cy="7.5" r="6.8" fill="#2020d0"/><circle cx="7.5" cy="7.5" r="4.8" fill="#40e040"/><circle cx="7.5" cy="7.5" r="3" fill="#f0e040"/><circle cx="7.5" cy="7.5" r="1.8" fill="#e02020"/><path d="M1 1L14 14M14 1L1 14" stroke="#000" stroke-width="0.8" opacity="0.7"/></svg>
<div style="position:absolute;left:1268px;top:8px;width:29px;height:18px;background:linear-gradient(#eef3f9 0%,#dde7f2 45%,#b8c9dc 50%,#c9d8e9 100%);border:1px solid #5c6b7c;border-top:none;border-right:none;border-radius:0 0 0 5px;"></div>
<div style="position:absolute;left:1277px;top:16px;width:12px;height:5px;background:#fff;border:1px solid #3d4a5c;border-radius:1px;"></div>
<div style="position:absolute;left:1296px;top:8px;width:28px;height:18px;background:linear-gradient(#eef3f9 0%,#dde7f2 45%,#b8c9dc 50%,#c9d8e9 100%);border-left:1px solid #5c6b7c;border-bottom:1px solid #5c6b7c;"></div>
<svg style="position:absolute;left:1302px;top:10px;" width="14" height="13" viewBox="0 0 14 13"><rect x="4.5" y="0.5" width="8" height="8" fill="#fff" stroke="#3d4a5c"/><rect x="1.5" y="3.5" width="9" height="9" fill="#fff" stroke="#3d4a5c"/><rect x="4" y="6" width="4" height="4" fill="none" stroke="#3d4a5c" stroke-width="1.4"/></svg>
<div style="position:absolute;left:1323px;top:8px;width:49px;height:18px;background:linear-gradient(#f0b0a4 0%,#e08c7c 40%,#c8452c 52%,#b83a24 75%,#d8705c 100%);border:1px solid #5a2018;border-top:none;border-radius:0 0 5px 0;"></div>
<svg style="position:absolute;left:1341px;top:10px;" width="14" height="12" viewBox="0 0 14 12"><path d="M2.5 2L11.5 10M11.5 2L2.5 10" stroke="#3a3a4a" stroke-width="4.6" stroke-linecap="square"/><path d="M2.5 2L11.5 10M11.5 2L2.5 10" stroke="#fff" stroke-width="2.6" stroke-linecap="square"/></svg>
<div style="position:absolute;left:23px;top:29.5px;height:26px;font:normal 13px 'Liberation Sans', sans-serif;line-height:26px;color:#000;white-space:nowrap;">File</div>
<div style="position:absolute;left:62.5px;top:29.5px;height:26px;font:normal 13px 'Liberation Sans', sans-serif;line-height:26px;color:#000;white-space:nowrap;">View</div>
<div style="position:absolute;left:109.4px;top:29.5px;height:26px;font:normal 13px 'Liberation Sans', sans-serif;line-height:26px;color:#000;white-space:nowrap;">Options</div>
<div style="position:absolute;left:175.8px;top:29.5px;height:26px;font:normal 13px 'Liberation Sans', sans-serif;line-height:26px;color:#000;white-space:nowrap;">System</div>
<div style="position:absolute;left:236.4px;top:29.5px;height:26px;font:normal 13px 'Liberation Sans', sans-serif;line-height:26px;color:#000;white-space:nowrap;">Window</div>
<div style="position:absolute;left:303.4px;top:29.5px;height:26px;font:normal 13px 'Liberation Sans', sans-serif;line-height:26px;color:#000;white-space:nowrap;">Help</div>
<div style="position:absolute;left:11px;top:60px;width:2px;height:2px;background:#b0b0b0;"></div>
<div style="position:absolute;left:11px;top:64px;width:2px;height:2px;background:#b0b0b0;"></div>
<div style="position:absolute;left:11px;top:68px;width:2px;height:2px;background:#b0b0b0;"></div>
<div style="position:absolute;left:11px;top:72px;width:2px;height:2px;background:#b0b0b0;"></div>
<div style="position:absolute;left:20px;top:60px;width:1px;height:16px;background:#b8b8b8;"></div>
<div style="position:absolute;left:72px;top:60px;width:1px;height:16px;background:#b8b8b8;"></div>
<div style="position:absolute;left:130px;top:60px;width:1px;height:16px;background:#b8b8b8;"></div>
<div style="position:absolute;left:182px;top:60px;width:1px;height:16px;background:#b8b8b8;"></div>
<div style="position:absolute;left:372px;top:60px;width:1px;height:16px;background:#b8b8b8;"></div>
<div style="position:absolute;left:424px;top:60px;width:1px;height:16px;background:#b8b8b8;"></div>
<div style="position:absolute;left:453px;top:60px;width:1px;height:16px;background:#b8b8b8;"></div>
<div style="position:absolute;left:231px;top:56px;width:23px;height:22px;border:1px solid #3399ff;background:rgba(255,255,255,0.6);"></div>
<div style="position:absolute;left:254px;top:56px;width:23px;height:22px;border:1px solid #3399ff;background:rgba(255,255,255,0.6);"></div>
<div style="position:absolute;left:277px;top:56px;width:23px;height:22px;border:1px solid #3399ff;background:rgba(255,255,255,0.6);"></div>
<div style="position:absolute;left:346px;top:56px;width:23px;height:22px;border:1px solid #3399ff;background:rgba(255,255,255,0.6);"></div>
<svg style="position:absolute;left:26px;top:60px;" width="17" height="14" viewBox="0 0 17 14"><path d="M1 4h5l1 1h6v2H4L1 13z" fill="#c8c040" stroke="#000" stroke-width="1"/><path d="M1 13L4 7h12l-3 6z" fill="#8a8a20" stroke="#000" stroke-width="1"/><path d="M9 3q3-3 6 0" stroke="#000" fill="none"/><path d="M14 1l2 2-3 1z" fill="#000"/></svg>
<svg style="position:absolute;left:50px;top:60px;" width="15" height="15" viewBox="0 0 15 15"><rect x="0.5" y="0.5" width="14" height="14" fill="#000"/><rect x="2.5" y="1.5" width="10" height="6" fill="#8a8a20"/><rect x="3.5" y="9.5" width="8" height="5" fill="#fff"/><rect x="8" y="10.5" width="2" height="3" fill="#000"/></svg>
<svg style="position:absolute;left:78px;top:59px;" width="16" height="17" viewBox="0 0 16 17"><path d="M5 1h7l3 3v12H5z" fill="#fff" stroke="#000"/><path d="M7 7h6M7 10h6M7 13h6" stroke="#000"/><circle cx="5" cy="6" r="4" fill="#40d0f0" stroke="#000"/><path d="M7.5 9l5 5" stroke="#2040c0" stroke-width="2.5"/></svg>
<svg style="position:absolute;left:100px;top:60px;" width="24" height="15" viewBox="0 0 24 15"><path d="M4 1h8l2 2v3H4z" fill="#fff" stroke="#000"/><rect x="1" y="6" width="15" height="6" rx="2" fill="#fff" stroke="#000"/><path d="M3 12h12v2H3z" fill="#fff" stroke="#000"/><rect x="8" y="8" width="4" height="1.5" fill="#e0d000"/><path d="M18 6h5l-2.5 3z" fill="#000"/></svg>
<svg style="position:absolute;left:135px;top:59px;" width="18" height="16" viewBox="0 0 18 16"><rect x="1" y="5" width="12" height="10" fill="#fff" stroke="#000"/><path d="M3 9h8M3 12h8" stroke="#000"/><path d="M3 7l5-5 4 3-4 3" fill="#fff" stroke="#000"/><rect x="14" y="1" width="2.5" height="6" fill="#000080"/></svg>
<svg style="position:absolute;left:161px;top:59px;" width="14" height="16" viewBox="0 0 14 16"><rect x="1" y="1" width="11" height="14" fill="#fff" stroke="#000"/><path d="M1 1l8 2v13l-8-2z" fill="#f0e060" stroke="#000"/><circle cx="7" cy="9" r="0.9" fill="#000"/></svg>
<svg style="position:absolute;left:188px;top:59px;" width="17" height="13" viewBox="0 0 17 13"><rect x="0.5" y="0.5" width="16" height="12" fill="#fff" stroke="#000" stroke-width="1.2"/><path d="M3 6q5-4 11 0" stroke="#000" fill="none"/><path d="M10 3L7 10" stroke="#e00000" stroke-width="1.5"/><rect x="2" y="10" width="13" height="1.5" fill="#000"/></svg>
<svg style="position:absolute;left:211px;top:58px;" width="16" height="17" viewBox="0 0 16 17"><path d="M1 0v16h15" stroke="#000" fill="none" stroke-width="1.2"/><path d="M2 12l3-4 3 3 3-2 4-2" stroke="#2040ff" fill="none" stroke-width="1.4"/></svg>
<svg style="position:absolute;left:232px;top:57px;" width="21" height="20" viewBox="0 0 21 20"><text x="1" y="8" font-family="Liberation Sans" font-size="8" fill="#800000">V</text><path d="M3 17H5Q7 17 8 13L10 5Q11.3 2 12.6 5L14.6 13Q15.6 17 17.6 17H20" stroke="#0000c0" fill="none" stroke-width="2"/></svg>
<svg style="position:absolute;left:255px;top:57px;" width="21" height="20" viewBox="0 0 21 20"><text x="0" y="8" font-family="Liberation Sans" font-size="8" fill="#800000">W</text><path d="M3 17H5Q7 17 8 13L10 5Q11.3 2 12.6 5L14.6 13Q15.6 17 17.6 17H20" stroke="#0000c0" fill="none" stroke-width="2"/></svg>
<svg style="position:absolute;left:280px;top:59px;" width="16" height="16" viewBox="0 0 16 16"><circle cx="8" cy="8" r="7" fill="#fff" stroke="#000" stroke-width="1.3"/><path d="M8 1v14M1 8h14" stroke="#000" stroke-width="1.3"/><path d="M4 5h3M5.5 3.5v3" stroke="#e00000" stroke-width="1.2"/></svg>
<svg style="position:absolute;left:303px;top:59px;" width="17" height="15" viewBox="0 0 17 15"><path d="M1 0v14h16" stroke="#000" fill="none" stroke-width="1.2"/><path d="M2 5h4l2-1h3l2 -1h4" stroke="#e00000" fill="none" stroke-width="1.3"/><path d="M2 10h4l2-1h3l2 -1h4" stroke="#2040ff" fill="none" stroke-width="1.3"/></svg>
<svg style="position:absolute;left:325px;top:59px;" width="17" height="15" viewBox="0 0 17 15"><rect x="0.5" y="0.5" width="16" height="13" rx="2" fill="#fff" stroke="#000" stroke-width="1.2"/><rect x="3" y="3" width="11" height="8" fill="#006000" stroke="#000"/><path d="M4 8q2-4 4 0t4-1" stroke="#c0ffc0" fill="none"/></svg>
<svg style="position:absolute;left:348px;top:59px;" width="19" height="17" viewBox="0 0 19 17"><path d="M0.5 11.5L9 8l9 3.5-9 5z" fill="#0000ff" stroke="#000" stroke-width="1"/><ellipse cx="9" cy="10" rx="6.5" ry="2.6" fill="#00c8ff"/><ellipse cx="9" cy="8.3" rx="5" ry="2.2" fill="#00ff80"/><ellipse cx="9" cy="6.6" rx="3.8" ry="1.9" fill="#ffff00"/><ellipse cx="9" cy="5" rx="2.8" ry="1.6" fill="#ff4040"/><ellipse cx="9" cy="3" rx="2" ry="1.6" fill="#ff00ff"/></svg>
<div style="position:absolute;left:378px;top:55px;height:22px;font:normal 11px 'Liberation Sans', sans-serif;line-height:22px;color:#800000;white-space:nowrap;transform:scaleX(0.85);transform-origin:left center;">Test</div>
<svg style="position:absolute;left:403px;top:58px;" width="12" height="17" viewBox="0 0 12 17"><circle cx="3" cy="2.5" r="1.8" fill="#b0b0b0"/><circle cx="8" cy="6" r="2.6" fill="#b0b0b0"/><circle cx="3" cy="9" r="1.8" fill="#b0b0b0"/><circle cx="7.5" cy="13" r="2.6" fill="#b0b0b0"/></svg>
<svg style="position:absolute;left:430px;top:59px;" width="17" height="16" viewBox="0 0 17 16"><rect x="1" y="1" width="6" height="5" fill="#008000"/><rect x="7" y="5" width="6" height="6" fill="#008000" stroke="#808000"/><path d="M0 12h6M2 12v3M8 14h7M14 8v6" stroke="#000" stroke-width="1.3"/><rect x="4" y="13" width="2" height="2" fill="#f00000"/><rect x="1" y="9" width="1.5" height="1.5" fill="#00e000"/></svg>
<svg style="position:absolute;left:461px;top:59px;" width="12" height="16" viewBox="0 0 12 16"><path d="M2 5q0-4 4-4t4 4-4 4v3" stroke="#000" stroke-width="4" fill="none"/><path d="M2 5q0-4 4-4t4 4-4 4v3" stroke="#f0f000" stroke-width="2" fill="none"/><circle cx="6" cy="14" r="2" fill="#f0f000" stroke="#000"/></svg>
<div style="position:absolute;left:9px;top:757px;width:148px;height:16px;border-left:1px solid #a0a0a0;border-top:1px solid #a0a0a0;border-right:1px solid #fff;border-bottom:1px solid #fff;background:#f0eeee;"></div>
<div style="position:absolute;left:25px;top:752px;height:26px;font:normal 13px 'Liberation Sans', sans-serif;line-height:26px;color:#000;white-space:nowrap;">2020-11-11 11:04:04</div>
<div style="position:absolute;left:160px;top:757px;width:147px;height:16px;border-left:1px solid #a0a0a0;border-top:1px solid #a0a0a0;border-right:1px solid #fff;border-bottom:1px solid #fff;background:#f0eeee;"></div>
<div style="position:absolute;left:173px;top:752px;height:26px;font:normal 13px 'Liberation Sans', sans-serif;line-height:26px;color:#000;white-space:nowrap;">Wavelength: 1310nm</div>
<div style="position:absolute;left:309px;top:757px;width:133px;height:16px;border-left:1px solid #a0a0a0;border-top:1px solid #a0a0a0;border-right:1px solid #fff;border-bottom:1px solid #fff;background:#f0eeee;"></div>
<div style="position:absolute;left:327px;top:752px;height:26px;font:normal 13px 'Liberation Sans', sans-serif;line-height:26px;color:#000;white-space:nowrap;">Clip Level: 13.5%</div>
<div style="position:absolute;left:444px;top:757px;width:104px;height:16px;border-left:1px solid #a0a0a0;border-top:1px solid #a0a0a0;border-right:1px solid #fff;border-bottom:1px solid #fff;background:#f0eeee;"></div>
<div style="position:absolute;left:457px;top:752px;height:26px;font:normal 13px 'Liberation Sans', sans-serif;line-height:26px;color:#000;white-space:nowrap;">Average: OFF</div>
<div style="position:absolute;left:548px;top:757px;width:105px;height:16px;border-left:1px solid #a0a0a0;border-top:1px solid #a0a0a0;border-right:1px solid #fff;border-bottom:1px solid #fff;background:#f0eeee;"></div>
<div style="position:absolute;left:567px;top:752px;height:26px;font:normal 13px 'Liberation Sans', sans-serif;line-height:26px;color:#000;white-space:nowrap;">HeadTilt: 0&deg;</div>
<div style="position:absolute;left:653px;top:757px;width:71px;height:16px;border-left:1px solid #a0a0a0;border-top:1px solid #a0a0a0;border-right:1px solid #fff;border-bottom:1px solid #fff;background:#f0eeee;"></div>
<div style="position:absolute;left:677px;top:752px;height:26px;font:normal 13px 'Liberation Sans', sans-serif;line-height:26px;color:#000;white-space:nowrap;">Run</div>
<div style="position:absolute;left:724px;top:757px;width:104px;height:16px;border-left:1px solid #a0a0a0;border-top:1px solid #a0a0a0;border-right:1px solid #fff;border-bottom:1px solid #fff;background:#f0eeee;"></div>
<div style="position:absolute;left:749px;top:752px;height:26px;font:normal 13px 'Liberation Sans', sans-serif;line-height:26px;color:#000;white-space:nowrap;">Filter: Off</div>
<div style="position:absolute;left:8px;top:775px;width:1366px;height:1px;background:#d0d8e0;"></div>
<div style="position:absolute;left:1355px;top:82px;width:18px;height:670px;background:#f0f0f0;border-left:1px solid #e8e8e8;"></div>
<svg style="position:absolute;left:1359px;top:87px;" width="10" height="8" viewBox="0 0 10 8"><path d="M1 6L5 2 9 6z" fill="#404040"/></svg>
<svg style="position:absolute;left:1359px;top:740px;" width="10" height="8" viewBox="0 0 10 8"><path d="M1 2L5 6 9 2z" fill="#404040"/></svg>
<div style="position:absolute;left:1356px;top:114px;width:15px;height:564px;background:linear-gradient(90deg,#f4f4f4,#e8e8e8 50%,#d8d8d8);border:1px solid #b0b0b0;border-radius:2px;"></div>
<svg style="position:absolute;left:1359px;top:390px;" width="9" height="10" viewBox="0 0 9 10"><path d="M1 1.5h7M1 3.5h7M1 5.5h7M1 7.5h7" stroke="#505050" stroke-width="0.9"/></svg>
<div style="position:absolute;left:1373px;top:81px;width:1px;height:671px;background:#f8f8f8;"></div>
<svg style="position:absolute;left:1226px;top:694px;" width="130" height="42" viewBox="0 0 130 42"><path d="M7.5 4L125 4 123 25 119 29 5 29z" fill="#e8eef0" opacity="0.6" transform="translate(0,1.5)"/><path d="M7.5 4L125 4 123 25 119 29 5 29z" fill="#f3f9fc"/><path d="M110 29h13l-13 10z" fill="#c5dce3"/><path d="M117 4l8 8M125 4l-8 8" stroke="#9a9a9a" stroke-width="1"/></svg>
<div style="position:absolute;left:1241px;top:697px;height:28px;font:normal 14px 'Liberation Sans', sans-serif;line-height:28px;color:#333;white-space:nowrap;">实时资讯更新</div>
<div style="position:absolute;left:1329.5px;top:705.5px;width:11.5px;height:11.5px;background:#e84a20;border-radius:2px;color:#fff;font:bold italic 11px 'Liberation Sans', sans-serif;line-height:11px;text-align:center;">N</div>
</body></html>
